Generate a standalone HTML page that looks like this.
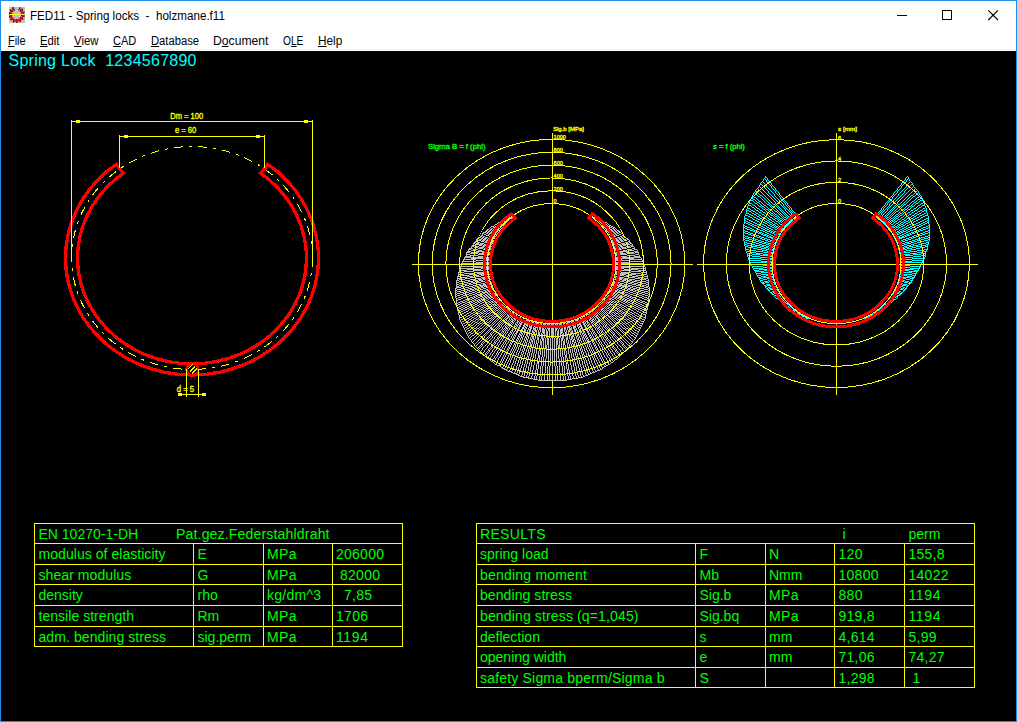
<!DOCTYPE html>
<html><head><meta charset="utf-8"><title>FED11 - Spring locks</title>
<style>
html,body{margin:0;padding:0;background:#000;}
body{width:1017px;height:722px;overflow:hidden;font-family:"Liberation Sans",sans-serif;}
#win{position:absolute;left:0;top:0;width:1015px;height:720px;border:1px solid #1e8fea;background:#000;overflow:hidden;}
#title{position:absolute;left:0;top:0;width:1015px;height:30px;background:#fff;}
#title .txt{position:absolute;left:29px;top:7px;font-size:12px;line-height:16px;color:#000;white-space:pre;transform-origin:0 0;transform:scaleX(0.970);}
#icon{position:absolute;left:8px;top:6px;width:16px;height:16px;}
#menu{position:absolute;left:0;top:30px;width:1015px;height:20px;background:#fff;border-bottom:0;}
#menu .line{position:absolute;left:0;top:18px;width:1015px;height:1px;background:#f0f0f0;}
.mi{position:absolute;top:2px;font-size:12px;line-height:16px;color:#000;white-space:pre;transform-origin:0 0;transform:scaleX(0.93);}
.mi u{text-decoration:underline;text-underline-offset:1px;}
#cv{position:absolute;left:-1px;top:-1px;}
#cv text{font-family:"Liberation Sans",sans-serif;white-space:pre;}
.cap{position:absolute;top:0;}
</style></head><body>
<div id="win">
<svg id="cv" width="1017" height="722" viewBox="0 0 1017 722" shape-rendering="crispEdges">
<ellipse cx="192" cy="258" rx="120.45" ry="111.45" fill="none" stroke="#ff0" stroke-width="1" stroke-dasharray="9 6 3 6"/>
<path d="M267.88 164.38 A126.47 117.02 0 1 1 116.12 164.38 L123.34 173.3 A114.43 105.88 0 1 0 260.66 173.3 Z" fill="none" stroke="#f00" stroke-width="3.3" stroke-linejoin="miter"/>
<ellipse cx="192.4" cy="369.45" rx="6" ry="5.6" fill="#000" stroke="#f00" stroke-width="2.2"/>
<line x1="187.8" y1="369.35" x2="192.8" y2="364.35" stroke="#ff0" stroke-width="1"/>
<line x1="189.9" y1="371.45" x2="194.9" y2="366.45" stroke="#ff0" stroke-width="1"/>
<line x1="192" y1="373.55" x2="197" y2="368.55" stroke="#ff0" stroke-width="1"/>
<path d="M71.55 261 V120 M312.95 261 V120 M71.55 121.5 H312.45" stroke="#ff0" stroke-width="1" fill="none"/>
<path d="M72.05 121.5 l7 -1.5 v3 z M76.05 120 h4 v3 h-4z" fill="#ff0"/>
<path d="M312.45 121.5 l-7 -1.5 v3 z M308.45 120 h-4 v3 h4z" fill="#ff0"/>
<path d="M119.73 168 V135 M264.77 168 V135 M119.73 136.5 H264.27" stroke="#ff0" stroke-width="1" fill="none"/>
<path d="M120.23 136.5 l7 -1.5 v3 z M124.23 135 h4 v3 h-4z" fill="#ff0"/>
<path d="M264.27 136.5 l-7 -1.5 v3 z M260.27 135 h-4 v3 h4z" fill="#ff0"/>
<path d="M186.4 369.45 V397 M198.4 369.45 V397 M178 394.5 H206" stroke="#ff0" stroke-width="1" fill="none"/>
<path d="M186.4 394.5 l-7 -1.5 v3z M182.4 393 h-4 v3 h4z" fill="#ff0"/>
<path d="M198.4 394.5 l7 -1.5 v3z M202.4 393 h4 v3 h-4z" fill="#ff0"/>
<text stroke="#ff0" stroke-width="0.35" x="170.2" y="119" font-size="8.3" textLength="33" lengthAdjust="spacingAndGlyphs" fill="#ff0">Dm = 100</text>
<text stroke="#ff0" stroke-width="0.35" x="175" y="133" font-size="8.3" textLength="21.3" lengthAdjust="spacingAndGlyphs" fill="#ff0">e = 60</text>
<text stroke="#ff0" stroke-width="0.35" x="176.8" y="392" font-size="8.3" textLength="17.3" lengthAdjust="spacingAndGlyphs" fill="#ff0">d = 5</text>
<path d="M412 264.5 H693 M552.1 133 V395" stroke="#ff0" stroke-width="1" fill="none"/>
<path d="M512 216.5h2M591 216.5h2M509 217.5h4M592 217.5h4M508 218.5h1M510 218.5h2M593 218.5h2M596 218.5h1M505 219.5h3M509 219.5h1M595 219.5h1M597 219.5h3M502 220.5h3M506 220.5h1M508 220.5h1M596 220.5h1M598 220.5h1M600 220.5h2M501 221.5h1M504 221.5h2M507 221.5h1M597 221.5h1M599 221.5h2M602 221.5h2M498 222.5h3M502 222.5h1M504 222.5h1M506 222.5h1M598 222.5h1M600 222.5h1M602 222.5h1M604 222.5h3M497 223.5h1M499 223.5h1M501 223.5h1M503 223.5h1M505 223.5h1M599 223.5h1M601 223.5h1M603 223.5h1M605 223.5h1M607 223.5h1M495 224.5h2M498 224.5h1M500 224.5h3M504 224.5h1M600 224.5h1M602 224.5h3M606 224.5h1M608 224.5h1M494 225.5h1M497 225.5h1M499 225.5h2M502 225.5h2M601 225.5h2M604 225.5h2M607 225.5h1M609 225.5h2M491 226.5h3M495 226.5h2M498 226.5h2M501 226.5h1M503 226.5h1M601 226.5h1M603 226.5h1M605 226.5h2M608 226.5h2M611 226.5h2M490 227.5h1M493 227.5h3M497 227.5h1M500 227.5h1M502 227.5h1M602 227.5h1M604 227.5h1M607 227.5h1M609 227.5h3M613 227.5h2M489 228.5h1M491 228.5h2M495 228.5h2M498 228.5h2M501 228.5h1M603 228.5h1M605 228.5h2M608 228.5h2M612 228.5h2M615 228.5h1M487 229.5h2M490 229.5h2M493 229.5h2M496 229.5h3M500 229.5h1M604 229.5h1M606 229.5h3M610 229.5h2M613 229.5h2M616 229.5h1M486 230.5h2M489 230.5h2M492 230.5h2M495 230.5h1M497 230.5h3M605 230.5h3M609 230.5h1M611 230.5h2M614 230.5h2M617 230.5h2M485 231.5h2M488 231.5h2M491 231.5h2M494 231.5h1M496 231.5h2M499 231.5h1M605 231.5h1M607 231.5h2M610 231.5h1M612 231.5h2M615 231.5h2M618 231.5h2M483 232.5h3M487 232.5h2M490 232.5h2M493 232.5h1M495 232.5h2M498 232.5h1M606 232.5h1M608 232.5h2M611 232.5h1M613 232.5h2M616 232.5h2M619 232.5h2M482 233.5h2M486 233.5h2M489 233.5h2M492 233.5h4M497 233.5h1M607 233.5h1M609 233.5h4M614 233.5h2M617 233.5h2M621 233.5h2M482 234.5h1M484 234.5h2M488 234.5h2M491 234.5h2M494 234.5h3M608 234.5h3M612 234.5h2M615 234.5h2M619 234.5h2M623 234.5h1M481 235.5h2M486 235.5h3M490 235.5h2M493 235.5h2M496 235.5h1M608 235.5h1M610 235.5h2M613 235.5h2M616 235.5h3M622 235.5h2M480 236.5h2M483 236.5h2M489 236.5h2M492 236.5h2M495 236.5h1M609 236.5h1M611 236.5h2M614 236.5h2M620 236.5h2M623 236.5h2M478 237.5h3M482 237.5h2M485 237.5h3M491 237.5h2M494 237.5h1M610 237.5h1M612 237.5h2M617 237.5h3M621 237.5h2M624 237.5h2M477 238.5h2M481 238.5h2M484 238.5h3M488 238.5h2M493 238.5h2M610 238.5h2M615 238.5h2M618 238.5h3M622 238.5h2M626 238.5h2M476 239.5h2M479 239.5h3M483 239.5h3M487 239.5h5M613 239.5h5M619 239.5h3M623 239.5h3M627 239.5h2M476 240.5h1M478 240.5h3M482 240.5h3M486 240.5h3M490 240.5h4M611 240.5h4M616 240.5h3M620 240.5h3M624 240.5h3M629 240.5h1M475 241.5h2M481 241.5h3M485 241.5h3M489 241.5h2M492 241.5h2M611 241.5h2M614 241.5h2M617 241.5h3M621 241.5h3M628 241.5h2M474 242.5h2M477 242.5h3M484 242.5h3M488 242.5h5M612 242.5h5M618 242.5h3M625 242.5h3M629 242.5h2M473 243.5h2M476 243.5h3M480 243.5h4M487 243.5h3M491 243.5h2M612 243.5h2M615 243.5h3M621 243.5h4M626 243.5h3M630 243.5h2M473 244.5h1M475 244.5h8M484 244.5h3M490 244.5h2M613 244.5h2M618 244.5h3M622 244.5h8M632 244.5h1M472 245.5h3M479 245.5h3M483 245.5h3M487 245.5h3M615 245.5h3M619 245.5h3M623 245.5h3M630 245.5h3M471 246.5h3M475 246.5h4M482 246.5h3M486 246.5h3M490 246.5h2M613 246.5h2M616 246.5h3M620 246.5h3M626 246.5h4M631 246.5h3M471 247.5h1M474 247.5h4M479 247.5h5M485 247.5h6M614 247.5h6M621 247.5h5M627 247.5h4M634 247.5h1M469 248.5h4M478 248.5h5M484 248.5h4M489 248.5h2M614 248.5h2M617 248.5h4M622 248.5h5M632 248.5h3M468 249.5h3M473 249.5h5M483 249.5h4M488 249.5h3M614 249.5h3M618 249.5h4M627 249.5h5M634 249.5h3M468 250.5h1M471 250.5h5M478 250.5h4M487 250.5h3M615 250.5h3M623 250.5h4M629 250.5h5M637 250.5h1M467 251.5h4M476 251.5h11M618 251.5h11M634 251.5h4M466 252.5h4M471 252.5h8M482 252.5h8M615 252.5h8M626 252.5h8M635 252.5h4M466 253.5h1M470 253.5h8M479 253.5h7M487 253.5h3M615 253.5h3M619 253.5h7M627 253.5h8M638 253.5h1M466 254.5h4M478 254.5h7M486 254.5h4M615 254.5h4M620 254.5h7M635 254.5h4M466 255.5h1M470 255.5h8M485 255.5h4M616 255.5h4M627 255.5h8M639 255.5h1M465 256.5h6M478 256.5h7M620 256.5h7M634 256.5h6M464 257.5h19M485 257.5h4M616 257.5h4M622 257.5h19M464 258.5h1M471 258.5h18M616 258.5h18M641 258.5h1M463 259.5h13M483 259.5h6M616 259.5h6M629 259.5h13M463 260.5h1M476 260.5h13M616 260.5h13M642 260.5h1M462 261.5h14M629 261.5h14M462 262.5h1M476 262.5h13M616 262.5h13M643 262.5h1M461 263.5h28M616 263.5h28M461 264.5h28M616 264.5h28M461 265.5h1M644 265.5h1M460 266.5h29M616 266.5h29M460 267.5h1M474 267.5h15M616 267.5h15M645 267.5h1M459 268.5h15M481 268.5h8M616 268.5h8M631 268.5h15M459 269.5h1M467 269.5h14M484 269.5h5M616 269.5h5M624 269.5h14M645 269.5h1M459 270.5h8M474 270.5h10M621 270.5h10M638 270.5h8M459 271.5h1M464 271.5h10M484 271.5h5M616 271.5h5M631 271.5h10M646 271.5h1M458 272.5h6M474 272.5h10M485 272.5h4M616 272.5h4M621 272.5h10M641 272.5h6M458 273.5h1M464 273.5h10M477 273.5h12M616 273.5h12M631 273.5h10M646 273.5h1M458 274.5h6M469 274.5h8M479 274.5h6M487 274.5h3M615 274.5h3M620 274.5h6M628 274.5h8M641 274.5h6M458 275.5h1M461 275.5h8M473 275.5h6M481 275.5h6M618 275.5h6M626 275.5h6M636 275.5h8M647 275.5h1M457 276.5h4M467 276.5h6M476 276.5h5M487 276.5h3M615 276.5h3M624 276.5h5M632 276.5h6M644 276.5h4M457 277.5h1M461 277.5h6M470 277.5h6M481 277.5h9M615 277.5h9M629 277.5h6M638 277.5h6M647 277.5h1M457 278.5h4M465 278.5h5M476 278.5h5M482 278.5h8M615 278.5h8M624 278.5h5M635 278.5h5M644 278.5h4M457 279.5h1M459 279.5h6M470 279.5h6M478 279.5h4M483 279.5h4M489 279.5h2M614 279.5h2M618 279.5h4M623 279.5h4M629 279.5h6M640 279.5h6M648 279.5h1M456 280.5h3M465 280.5h5M473 280.5h5M479 280.5h4M485 280.5h4M616 280.5h4M622 280.5h4M627 280.5h5M635 280.5h5M646 280.5h3M456 281.5h1M459 281.5h6M468 281.5h5M475 281.5h4M481 281.5h4M489 281.5h2M614 281.5h2M620 281.5h4M626 281.5h4M632 281.5h5M640 281.5h6M648 281.5h1M456 282.5h3M464 282.5h4M471 282.5h4M477 282.5h4M485 282.5h4M490 282.5h2M613 282.5h2M616 282.5h4M624 282.5h4M630 282.5h4M637 282.5h4M646 282.5h3M456 283.5h1M459 283.5h5M467 283.5h4M473 283.5h4M481 283.5h4M486 283.5h6M613 283.5h6M620 283.5h4M628 283.5h4M634 283.5h4M641 283.5h5M648 283.5h1M456 284.5h3M463 284.5h4M469 284.5h4M477 284.5h4M483 284.5h3M487 284.5h5M613 284.5h5M619 284.5h3M624 284.5h4M632 284.5h4M638 284.5h4M646 284.5h3M456 285.5h1M459 285.5h4M465 285.5h4M473 285.5h4M479 285.5h11M491 285.5h2M612 285.5h2M615 285.5h11M628 285.5h4M636 285.5h4M642 285.5h4M648 285.5h1M456 286.5h3M461 286.5h4M469 286.5h4M475 286.5h4M480 286.5h3M484 286.5h3M488 286.5h3M614 286.5h3M618 286.5h3M622 286.5h3M626 286.5h4M632 286.5h4M640 286.5h4M646 286.5h3M456 287.5h5M465 287.5h4M472 287.5h3M477 287.5h3M481 287.5h3M486 287.5h2M491 287.5h2M612 287.5h2M617 287.5h2M621 287.5h3M625 287.5h3M630 287.5h3M636 287.5h4M644 287.5h4M649 287.5h1M455 288.5h2M461 288.5h4M468 288.5h4M474 288.5h3M478 288.5h3M483 288.5h3M488 288.5h3M492 288.5h2M611 288.5h2M614 288.5h3M619 288.5h3M624 288.5h3M628 288.5h3M633 288.5h4M640 288.5h4M648 288.5h2M455 289.5h1M457 289.5h4M465 289.5h3M470 289.5h4M475 289.5h3M480 289.5h3M486 289.5h2M490 289.5h4M611 289.5h4M617 289.5h2M622 289.5h3M627 289.5h3M631 289.5h4M637 289.5h3M644 289.5h4M649 289.5h1M455 290.5h2M461 290.5h4M467 290.5h3M472 290.5h3M477 290.5h3M483 290.5h3M487 290.5h5M493 290.5h2M610 290.5h2M613 290.5h5M619 290.5h3M625 290.5h3M630 290.5h3M635 290.5h3M640 290.5h4M648 290.5h2M455 291.5h1M457 291.5h4M464 291.5h3M469 291.5h3M475 291.5h2M480 291.5h3M485 291.5h2M488 291.5h2M491 291.5h2M494 291.5h2M609 291.5h2M612 291.5h2M615 291.5h2M618 291.5h2M622 291.5h3M628 291.5h2M633 291.5h3M638 291.5h3M644 291.5h4M649 291.5h1M455 292.5h2M460 292.5h4M466 292.5h3M472 292.5h3M477 292.5h3M482 292.5h6M489 292.5h2M492 292.5h2M495 292.5h1M609 292.5h1M611 292.5h2M614 292.5h2M617 292.5h6M625 292.5h3M630 292.5h3M636 292.5h3M641 292.5h4M648 292.5h2M455 293.5h1M457 293.5h3M463 293.5h3M469 293.5h3M475 293.5h2M480 293.5h2M483 293.5h2M487 293.5h2M490 293.5h2M493 293.5h2M496 293.5h1M608 293.5h1M610 293.5h2M613 293.5h2M616 293.5h2M620 293.5h2M623 293.5h2M628 293.5h2M633 293.5h3M639 293.5h3M645 293.5h3M649 293.5h1M455 294.5h2M460 294.5h3M466 294.5h3M472 294.5h3M477 294.5h3M481 294.5h2M485 294.5h2M488 294.5h2M491 294.5h2M494 294.5h2M497 294.5h1M607 294.5h1M609 294.5h2M612 294.5h2M615 294.5h2M618 294.5h2M622 294.5h2M625 294.5h3M630 294.5h3M636 294.5h3M642 294.5h3M648 294.5h2M455 295.5h1M457 295.5h3M463 295.5h3M469 295.5h3M475 295.5h2M478 295.5h3M483 295.5h2M486 295.5h2M489 295.5h2M492 295.5h2M495 295.5h2M608 295.5h2M611 295.5h2M614 295.5h2M617 295.5h2M620 295.5h2M624 295.5h3M628 295.5h2M633 295.5h3M639 295.5h3M645 295.5h3M649 295.5h1M455 296.5h2M461 296.5h2M466 296.5h3M473 296.5h2M476 296.5h2M480 296.5h3M484 296.5h2M487 296.5h2M490 296.5h2M493 296.5h2M497 296.5h1M607 296.5h1M610 296.5h2M613 296.5h2M616 296.5h2M619 296.5h2M622 296.5h3M627 296.5h2M630 296.5h2M636 296.5h3M642 296.5h2M648 296.5h2M455 297.5h1M458 297.5h3M463 297.5h3M470 297.5h3M474 297.5h2M478 297.5h2M482 297.5h2M485 297.5h2M488 297.5h2M491 297.5h2M495 297.5h2M498 297.5h1M606 297.5h1M608 297.5h2M612 297.5h2M615 297.5h2M618 297.5h2M621 297.5h2M625 297.5h2M629 297.5h2M632 297.5h3M639 297.5h3M644 297.5h3M648 297.5h1M456 298.5h2M461 298.5h2M468 298.5h2M472 298.5h2M476 298.5h2M480 298.5h2M483 298.5h2M486 298.5h2M489 298.5h2M493 298.5h2M496 298.5h2M499 298.5h1M605 298.5h1M607 298.5h2M610 298.5h2M614 298.5h2M617 298.5h2M620 298.5h2M623 298.5h2M627 298.5h2M631 298.5h2M635 298.5h2M642 298.5h2M647 298.5h2M456 299.5h1M458 299.5h3M465 299.5h3M469 299.5h3M474 299.5h2M478 299.5h2M481 299.5h2M484 299.5h2M488 299.5h1M491 299.5h2M494 299.5h2M497 299.5h2M500 299.5h1M604 299.5h1M606 299.5h2M609 299.5h2M612 299.5h2M616 299.5h1M619 299.5h2M622 299.5h2M625 299.5h2M629 299.5h2M633 299.5h3M637 299.5h3M644 299.5h3M648 299.5h1M456 300.5h2M463 300.5h2M467 300.5h2M472 300.5h2M475 300.5h3M479 300.5h2M482 300.5h2M486 300.5h2M490 300.5h1M493 300.5h1M496 300.5h1M498 300.5h3M604 300.5h3M608 300.5h1M611 300.5h1M614 300.5h1M617 300.5h2M621 300.5h2M624 300.5h2M627 300.5h3M631 300.5h2M636 300.5h2M640 300.5h2M647 300.5h2M456 301.5h1M460 301.5h3M465 301.5h2M469 301.5h3M473 301.5h2M477 301.5h2M480 301.5h2M484 301.5h2M488 301.5h2M491 301.5h2M494 301.5h2M497 301.5h3M501 301.5h1M603 301.5h1M605 301.5h3M609 301.5h2M612 301.5h2M615 301.5h2M619 301.5h2M623 301.5h2M626 301.5h2M630 301.5h2M633 301.5h3M638 301.5h2M642 301.5h3M648 301.5h1M456 302.5h1M458 302.5h2M462 302.5h3M467 302.5h2M471 302.5h2M475 302.5h2M478 302.5h2M482 302.5h2M486 302.5h2M489 302.5h2M492 302.5h2M495 302.5h3M499 302.5h2M502 302.5h1M602 302.5h1M604 302.5h2M607 302.5h3M611 302.5h2M614 302.5h2M617 302.5h2M621 302.5h2M625 302.5h2M628 302.5h2M632 302.5h2M636 302.5h2M640 302.5h3M645 302.5h2M648 302.5h1M456 303.5h2M460 303.5h2M465 303.5h2M469 303.5h2M473 303.5h2M477 303.5h1M480 303.5h2M485 303.5h1M488 303.5h1M491 303.5h1M494 303.5h1M496 303.5h1M498 303.5h1M501 303.5h1M503 303.5h1M601 303.5h1M603 303.5h1M606 303.5h1M608 303.5h1M610 303.5h1M613 303.5h1M616 303.5h1M619 303.5h1M623 303.5h2M627 303.5h1M630 303.5h2M634 303.5h2M638 303.5h2M643 303.5h2M647 303.5h2M456 304.5h1M458 304.5h2M463 304.5h2M467 304.5h2M471 304.5h2M475 304.5h2M479 304.5h1M483 304.5h2M486 304.5h2M489 304.5h2M492 304.5h4M497 304.5h1M499 304.5h2M502 304.5h1M504 304.5h1M600 304.5h1M602 304.5h1M604 304.5h2M607 304.5h1M609 304.5h4M614 304.5h2M617 304.5h2M620 304.5h2M625 304.5h1M628 304.5h2M632 304.5h2M636 304.5h2M640 304.5h2M645 304.5h2M648 304.5h1M456 305.5h2M461 305.5h2M465 305.5h2M469 305.5h2M473 305.5h2M477 305.5h2M481 305.5h2M484 305.5h2M488 305.5h1M491 305.5h1M493 305.5h1M495 305.5h2M498 305.5h1M500 305.5h2M503 305.5h1M505 305.5h1M599 305.5h1M601 305.5h1M603 305.5h2M606 305.5h1M608 305.5h2M611 305.5h1M613 305.5h1M616 305.5h1M619 305.5h2M622 305.5h2M626 305.5h2M630 305.5h2M634 305.5h2M638 305.5h2M642 305.5h2M647 305.5h2M456 306.5h1M459 306.5h2M463 306.5h2M467 306.5h2M471 306.5h2M475 306.5h2M479 306.5h2M483 306.5h1M486 306.5h2M489 306.5h4M494 306.5h1M497 306.5h1M499 306.5h1M501 306.5h2M504 306.5h1M506 306.5h2M597 306.5h2M600 306.5h1M602 306.5h2M605 306.5h1M607 306.5h1M610 306.5h1M612 306.5h4M617 306.5h2M621 306.5h1M624 306.5h2M628 306.5h2M632 306.5h2M636 306.5h2M640 306.5h2M644 306.5h2M647 306.5h1M457 307.5h2M461 307.5h2M465 307.5h2M469 307.5h2M473 307.5h2M478 307.5h1M481 307.5h2M484 307.5h2M488 307.5h1M490 307.5h1M493 307.5h1M495 307.5h2M498 307.5h1M500 307.5h1M503 307.5h1M505 307.5h2M508 307.5h1M596 307.5h1M598 307.5h2M601 307.5h1M604 307.5h1M606 307.5h1M608 307.5h2M611 307.5h1M614 307.5h1M616 307.5h1M619 307.5h2M622 307.5h2M626 307.5h1M630 307.5h2M634 307.5h2M638 307.5h2M642 307.5h2M646 307.5h2M457 308.5h1M459 308.5h2M463 308.5h2M467 308.5h2M471 308.5h2M476 308.5h2M480 308.5h1M483 308.5h1M486 308.5h4M491 308.5h2M494 308.5h1M496 308.5h2M499 308.5h1M501 308.5h2M504 308.5h2M507 308.5h1M509 308.5h1M595 308.5h1M597 308.5h1M599 308.5h2M602 308.5h2M605 308.5h1M607 308.5h2M610 308.5h1M612 308.5h2M615 308.5h4M621 308.5h1M624 308.5h1M627 308.5h2M632 308.5h2M636 308.5h2M640 308.5h2M644 308.5h2M647 308.5h1M457 309.5h2M461 309.5h2M465 309.5h2M469 309.5h2M474 309.5h2M478 309.5h2M481 309.5h2M485 309.5h1M487 309.5h1M490 309.5h1M493 309.5h1M495 309.5h1M498 309.5h1M500 309.5h1M502 309.5h3M506 309.5h1M508 309.5h1M510 309.5h1M594 309.5h1M596 309.5h1M598 309.5h1M600 309.5h3M604 309.5h1M606 309.5h1M609 309.5h1M611 309.5h1M614 309.5h1M617 309.5h1M619 309.5h1M622 309.5h2M625 309.5h2M629 309.5h2M634 309.5h2M638 309.5h2M642 309.5h2M646 309.5h2M457 310.5h1M459 310.5h2M463 310.5h2M468 310.5h1M472 310.5h2M476 310.5h2M480 310.5h1M483 310.5h2M486 310.5h1M488 310.5h2M491 310.5h2M494 310.5h1M496 310.5h2M499 310.5h1M501 310.5h1M503 310.5h1M505 310.5h1M507 310.5h1M509 310.5h1M511 310.5h1M593 310.5h1M595 310.5h1M597 310.5h1M599 310.5h1M601 310.5h1M603 310.5h1M605 310.5h1M607 310.5h2M610 310.5h1M612 310.5h2M615 310.5h2M618 310.5h1M620 310.5h2M624 310.5h1M627 310.5h2M631 310.5h2M636 310.5h1M640 310.5h2M644 310.5h3M458 311.5h1M461 311.5h2M466 311.5h2M471 311.5h1M475 311.5h1M478 311.5h2M482 311.5h1M484 311.5h2M487 311.5h1M490 311.5h1M493 311.5h1M495 311.5h1M498 311.5h1M500 311.5h1M502 311.5h1M504 311.5h1M506 311.5h1M508 311.5h1M510 311.5h1M512 311.5h2M591 311.5h2M594 311.5h1M596 311.5h1M598 311.5h1M600 311.5h1M602 311.5h1M604 311.5h1M606 311.5h1M609 311.5h1M611 311.5h1M614 311.5h1M617 311.5h1M619 311.5h2M622 311.5h1M625 311.5h2M629 311.5h1M633 311.5h1M637 311.5h2M642 311.5h2M646 311.5h1M458 312.5h3M464 312.5h2M469 312.5h2M473 312.5h2M477 312.5h1M480 312.5h2M483 312.5h1M486 312.5h1M489 312.5h1M491 312.5h2M494 312.5h1M497 312.5h1M499 312.5h1M501 312.5h1M503 312.5h1M505 312.5h1M507 312.5h1M509 312.5h1M511 312.5h2M514 312.5h1M590 312.5h1M592 312.5h2M595 312.5h1M597 312.5h1M599 312.5h1M601 312.5h1M603 312.5h1M605 312.5h1M607 312.5h1M610 312.5h1M612 312.5h2M615 312.5h1M618 312.5h1M621 312.5h1M623 312.5h2M627 312.5h1M630 312.5h2M634 312.5h2M639 312.5h2M644 312.5h3M458 313.5h1M462 313.5h2M467 313.5h2M471 313.5h2M475 313.5h2M478 313.5h2M481 313.5h2M484 313.5h2M487 313.5h2M490 313.5h1M493 313.5h1M495 313.5h2M498 313.5h1M500 313.5h1M502 313.5h1M504 313.5h1M506 313.5h1M508 313.5h1M510 313.5h2M513 313.5h1M515 313.5h1M589 313.5h1M591 313.5h1M593 313.5h2M596 313.5h1M598 313.5h1M600 313.5h1M602 313.5h1M604 313.5h1M606 313.5h1M608 313.5h2M611 313.5h1M614 313.5h1M616 313.5h2M619 313.5h2M622 313.5h2M625 313.5h2M628 313.5h2M632 313.5h2M636 313.5h2M641 313.5h2M646 313.5h1M458 314.5h1M460 314.5h2M466 314.5h1M470 314.5h1M473 314.5h2M477 314.5h1M480 314.5h1M483 314.5h1M486 314.5h1M489 314.5h1M492 314.5h1M494 314.5h1M497 314.5h1M499 314.5h1M501 314.5h1M503 314.5h1M505 314.5h1M507 314.5h1M509 314.5h1M511 314.5h2M514 314.5h1M516 314.5h2M587 314.5h2M590 314.5h1M592 314.5h2M595 314.5h1M597 314.5h1M599 314.5h1M601 314.5h1M603 314.5h1M605 314.5h1M607 314.5h1M610 314.5h1M612 314.5h1M615 314.5h1M618 314.5h1M621 314.5h1M624 314.5h1M627 314.5h1M630 314.5h2M634 314.5h1M638 314.5h1M643 314.5h3M459 315.5h1M464 315.5h2M468 315.5h2M472 315.5h1M475 315.5h2M478 315.5h2M482 315.5h1M485 315.5h1M488 315.5h1M490 315.5h2M493 315.5h1M496 315.5h3M500 315.5h1M502 315.5h1M504 315.5h1M507 315.5h2M510 315.5h1M512 315.5h1M514 315.5h3M518 315.5h1M586 315.5h1M588 315.5h3M592 315.5h1M594 315.5h1M596 315.5h2M600 315.5h1M602 315.5h1M604 315.5h1M606 315.5h3M611 315.5h1M613 315.5h2M616 315.5h1M619 315.5h1M622 315.5h1M625 315.5h2M628 315.5h2M632 315.5h1M635 315.5h2M639 315.5h2M645 315.5h1M459 316.5h1M462 316.5h2M466 316.5h2M470 316.5h2M474 316.5h1M477 316.5h1M480 316.5h2M483 316.5h2M486 316.5h2M489 316.5h1M492 316.5h1M494 316.5h3M499 316.5h1M501 316.5h1M503 316.5h1M506 316.5h1M508 316.5h2M511 316.5h1M513 316.5h1M515 316.5h3M520 316.5h2M583 316.5h2M587 316.5h3M591 316.5h1M593 316.5h1M595 316.5h2M598 316.5h1M601 316.5h1M603 316.5h1M605 316.5h1M608 316.5h3M612 316.5h1M615 316.5h1M617 316.5h2M620 316.5h2M623 316.5h2M627 316.5h1M630 316.5h1M633 316.5h2M637 316.5h2M641 316.5h2M645 316.5h1M459 317.5h3M465 317.5h1M469 317.5h1M472 317.5h2M476 317.5h1M479 317.5h1M482 317.5h1M485 317.5h1M488 317.5h1M491 317.5h1M493 317.5h1M495 317.5h1M498 317.5h1M500 317.5h1M502 317.5h1M505 317.5h1M507 317.5h2M510 317.5h1M512 317.5h1M514 317.5h2M517 317.5h1M519 317.5h2M522 317.5h1M582 317.5h1M584 317.5h2M587 317.5h1M589 317.5h2M592 317.5h1M594 317.5h1M596 317.5h2M599 317.5h1M602 317.5h1M604 317.5h1M606 317.5h1M609 317.5h1M611 317.5h1M613 317.5h1M616 317.5h1M619 317.5h1M622 317.5h1M625 317.5h1M628 317.5h1M631 317.5h2M635 317.5h1M639 317.5h1M643 317.5h3M459 318.5h1M463 318.5h2M467 318.5h2M471 318.5h1M474 318.5h2M478 318.5h1M481 318.5h1M484 318.5h1M487 318.5h1M489 318.5h2M492 318.5h1M494 318.5h1M497 318.5h1M499 318.5h1M501 318.5h1M504 318.5h1M506 318.5h2M509 318.5h1M511 318.5h1M513 318.5h2M516 318.5h1M519 318.5h3M523 318.5h2M580 318.5h2M583 318.5h3M588 318.5h1M590 318.5h2M593 318.5h1M595 318.5h1M597 318.5h2M600 318.5h1M603 318.5h1M605 318.5h1M607 318.5h1M610 318.5h1M612 318.5h1M614 318.5h2M617 318.5h1M620 318.5h1M623 318.5h1M626 318.5h1M629 318.5h2M633 318.5h1M636 318.5h2M640 318.5h2M645 318.5h1M459 319.5h1M461 319.5h2M465 319.5h2M469 319.5h2M473 319.5h1M476 319.5h2M479 319.5h2M482 319.5h2M485 319.5h2M488 319.5h1M491 319.5h1M493 319.5h1M496 319.5h1M498 319.5h1M501 319.5h1M503 319.5h1M505 319.5h2M509 319.5h1M511 319.5h2M514 319.5h2M518 319.5h2M521 319.5h3M526 319.5h2M577 319.5h2M581 319.5h3M585 319.5h2M589 319.5h2M592 319.5h2M595 319.5h1M598 319.5h2M601 319.5h1M603 319.5h1M606 319.5h1M608 319.5h1M611 319.5h1M613 319.5h1M616 319.5h1M618 319.5h2M621 319.5h2M624 319.5h2M627 319.5h2M631 319.5h1M634 319.5h2M638 319.5h2M642 319.5h3M460 320.5h1M464 320.5h1M468 320.5h1M471 320.5h2M475 320.5h1M478 320.5h1M481 320.5h1M484 320.5h1M487 320.5h1M490 320.5h1M492 320.5h1M495 320.5h1M497 320.5h1M500 320.5h1M502 320.5h1M504 320.5h1M506 320.5h1M508 320.5h1M510 320.5h1M512 320.5h2M515 320.5h1M517 320.5h1M519 320.5h2M522 320.5h2M526 320.5h4M575 320.5h4M581 320.5h2M584 320.5h2M587 320.5h1M589 320.5h1M591 320.5h2M594 320.5h1M596 320.5h1M598 320.5h1M600 320.5h1M602 320.5h1M604 320.5h1M607 320.5h1M609 320.5h1M612 320.5h1M614 320.5h1M617 320.5h1M620 320.5h1M623 320.5h1M626 320.5h1M629 320.5h1M632 320.5h2M636 320.5h1M640 320.5h1M644 320.5h1M460 321.5h1M462 321.5h2M466 321.5h2M470 321.5h1M473 321.5h2M477 321.5h1M480 321.5h1M483 321.5h1M486 321.5h1M489 321.5h1M491 321.5h1M494 321.5h1M496 321.5h1M499 321.5h1M501 321.5h1M503 321.5h1M505 321.5h1M507 321.5h1M509 321.5h1M511 321.5h2M514 321.5h1M517 321.5h2M520 321.5h3M525 321.5h2M528 321.5h2M531 321.5h3M571 321.5h3M575 321.5h2M578 321.5h2M582 321.5h3M586 321.5h2M590 321.5h1M592 321.5h2M595 321.5h1M597 321.5h1M599 321.5h1M601 321.5h1M603 321.5h1M605 321.5h1M608 321.5h1M610 321.5h1M613 321.5h1M615 321.5h1M618 321.5h1M621 321.5h1M624 321.5h1M627 321.5h1M630 321.5h2M634 321.5h1M637 321.5h2M641 321.5h3M461 322.5h1M465 322.5h1M468 322.5h2M472 322.5h1M475 322.5h2M479 322.5h1M482 322.5h1M485 322.5h1M487 322.5h2M490 322.5h1M493 322.5h1M495 322.5h1M498 322.5h1M500 322.5h1M502 322.5h1M504 322.5h1M506 322.5h1M508 322.5h1M510 322.5h1M512 322.5h2M516 322.5h2M519 322.5h1M521 322.5h2M525 322.5h4M531 322.5h3M535 322.5h3M567 322.5h3M571 322.5h3M576 322.5h4M582 322.5h2M585 322.5h1M587 322.5h2M591 322.5h2M594 322.5h1M596 322.5h1M598 322.5h1M600 322.5h1M602 322.5h1M604 322.5h1M606 322.5h1M609 322.5h1M611 322.5h1M614 322.5h1M616 322.5h2M619 322.5h1M622 322.5h1M625 322.5h1M628 322.5h2M632 322.5h1M635 322.5h2M639 322.5h1M643 322.5h1M461 323.5h1M463 323.5h2M467 323.5h1M471 323.5h1M474 323.5h1M477 323.5h2M480 323.5h2M483 323.5h2M486 323.5h1M489 323.5h1M492 323.5h1M494 323.5h1M497 323.5h1M499 323.5h1M501 323.5h1M503 323.5h1M505 323.5h1M508 323.5h2M511 323.5h1M513 323.5h1M515 323.5h1M517 323.5h1M519 323.5h3M524 323.5h2M527 323.5h2M530 323.5h3M535 323.5h4M540 323.5h2M543 323.5h2M560 323.5h2M563 323.5h2M566 323.5h4M572 323.5h3M576 323.5h2M579 323.5h2M583 323.5h3M587 323.5h1M589 323.5h1M591 323.5h1M593 323.5h1M595 323.5h2M599 323.5h1M601 323.5h1M603 323.5h1M605 323.5h1M607 323.5h1M610 323.5h1M612 323.5h1M615 323.5h1M618 323.5h1M620 323.5h2M623 323.5h2M626 323.5h2M630 323.5h1M633 323.5h1M637 323.5h1M640 323.5h3M462 324.5h1M466 324.5h1M469 324.5h2M473 324.5h1M476 324.5h1M479 324.5h1M482 324.5h1M485 324.5h1M488 324.5h1M491 324.5h1M493 324.5h1M496 324.5h1M498 324.5h1M500 324.5h1M502 324.5h1M505 324.5h1M507 324.5h1M509 324.5h2M512 324.5h1M515 324.5h2M518 324.5h1M520 324.5h2M524 324.5h4M530 324.5h3M534 324.5h3M538 324.5h1M540 324.5h2M543 324.5h3M547 324.5h3M551 324.5h3M555 324.5h3M559 324.5h3M563 324.5h2M566 324.5h1M568 324.5h3M572 324.5h3M577 324.5h4M583 324.5h2M586 324.5h1M588 324.5h2M592 324.5h1M594 324.5h2M597 324.5h1M599 324.5h1M602 324.5h1M604 324.5h1M606 324.5h1M608 324.5h1M611 324.5h1M613 324.5h1M616 324.5h1M619 324.5h1M622 324.5h1M625 324.5h1M628 324.5h1M631 324.5h1M634 324.5h2M638 324.5h1M642 324.5h1M462 325.5h1M464 325.5h2M468 325.5h1M471 325.5h2M475 325.5h1M478 325.5h1M481 325.5h1M484 325.5h1M487 325.5h1M489 325.5h2M492 325.5h1M495 325.5h1M498 325.5h2M501 325.5h1M504 325.5h1M506 325.5h1M508 325.5h2M511 325.5h1M514 325.5h1M516 325.5h2M519 325.5h2M523 325.5h2M526 325.5h2M529 325.5h1M531 325.5h2M534 325.5h3M538 325.5h1M540 325.5h2M543 325.5h3M547 325.5h3M551 325.5h3M555 325.5h3M559 325.5h3M563 325.5h2M566 325.5h1M568 325.5h3M572 325.5h2M575 325.5h1M577 325.5h2M580 325.5h2M584 325.5h2M587 325.5h2M590 325.5h1M593 325.5h1M595 325.5h2M598 325.5h1M600 325.5h1M603 325.5h1M605 325.5h2M609 325.5h1M612 325.5h1M614 325.5h2M617 325.5h1M620 325.5h1M623 325.5h1M626 325.5h1M629 325.5h1M632 325.5h2M636 325.5h1M639 325.5h3M463 326.5h1M467 326.5h1M470 326.5h1M474 326.5h1M477 326.5h1M480 326.5h1M483 326.5h1M486 326.5h1M488 326.5h1M491 326.5h1M494 326.5h1M497 326.5h1M499 326.5h1M501 326.5h1M503 326.5h1M505 326.5h1M507 326.5h1M509 326.5h1M511 326.5h1M514 326.5h2M517 326.5h1M519 326.5h2M523 326.5h3M527 326.5h1M529 326.5h3M534 326.5h4M539 326.5h2M543 326.5h3M547 326.5h3M551 326.5h3M555 326.5h3M559 326.5h3M564 326.5h2M567 326.5h4M573 326.5h3M577 326.5h1M579 326.5h3M584 326.5h2M587 326.5h1M589 326.5h2M593 326.5h1M595 326.5h1M597 326.5h1M599 326.5h1M601 326.5h1M603 326.5h1M605 326.5h1M607 326.5h1M610 326.5h1M613 326.5h1M616 326.5h1M618 326.5h1M621 326.5h1M624 326.5h1M627 326.5h1M630 326.5h1M634 326.5h1M637 326.5h1M641 326.5h1M463 327.5h1M465 327.5h2M469 327.5h1M472 327.5h2M476 327.5h1M479 327.5h1M482 327.5h1M485 327.5h1M487 327.5h1M491 327.5h1M493 327.5h1M496 327.5h1M498 327.5h1M500 327.5h1M502 327.5h1M505 327.5h2M508 327.5h1M510 327.5h1M513 327.5h2M516 327.5h1M518 327.5h2M522 327.5h2M525 327.5h2M529 327.5h3M533 327.5h1M535 327.5h3M539 327.5h2M542 327.5h2M545 327.5h1M547 327.5h3M551 327.5h3M555 327.5h3M559 327.5h1M561 327.5h2M564 327.5h2M567 327.5h3M571 327.5h1M573 327.5h3M578 327.5h2M581 327.5h2M585 327.5h2M588 327.5h1M590 327.5h2M594 327.5h1M596 327.5h1M598 327.5h2M602 327.5h1M604 327.5h1M606 327.5h1M608 327.5h1M611 327.5h1M613 327.5h1M617 327.5h1M619 327.5h1M622 327.5h1M625 327.5h1M628 327.5h1M631 327.5h2M635 327.5h1M638 327.5h3M464 328.5h1M467 328.5h2M471 328.5h1M474 328.5h2M477 328.5h2M480 328.5h2M484 328.5h1M486 328.5h1M490 328.5h1M492 328.5h1M495 328.5h1M497 328.5h1M499 328.5h1M502 328.5h1M504 328.5h1M506 328.5h2M509 328.5h1M512 328.5h1M514 328.5h1M516 328.5h1M518 328.5h2M522 328.5h3M526 328.5h1M528 328.5h1M530 328.5h2M533 328.5h3M537 328.5h1M539 328.5h2M542 328.5h2M545 328.5h1M547 328.5h3M551 328.5h3M555 328.5h3M559 328.5h1M561 328.5h2M564 328.5h2M567 328.5h1M569 328.5h3M573 328.5h2M576 328.5h1M578 328.5h1M580 328.5h3M585 328.5h2M588 328.5h1M590 328.5h1M592 328.5h1M595 328.5h1M597 328.5h2M600 328.5h1M602 328.5h1M605 328.5h1M607 328.5h1M609 328.5h1M612 328.5h1M614 328.5h1M618 328.5h1M620 328.5h1M623 328.5h2M626 328.5h2M629 328.5h2M633 328.5h1M636 328.5h2M640 328.5h1M464 329.5h1M466 329.5h1M470 329.5h1M473 329.5h1M476 329.5h1M479 329.5h1M483 329.5h1M485 329.5h1M489 329.5h1M491 329.5h1M494 329.5h1M496 329.5h1M498 329.5h1M501 329.5h1M503 329.5h1M505 329.5h1M507 329.5h1M509 329.5h1M512 329.5h2M515 329.5h1M517 329.5h2M521 329.5h2M524 329.5h2M528 329.5h3M533 329.5h3M537 329.5h1M539 329.5h2M542 329.5h3M546 329.5h1M548 329.5h2M551 329.5h3M555 329.5h2M558 329.5h1M560 329.5h3M564 329.5h2M567 329.5h1M569 329.5h3M574 329.5h3M579 329.5h2M582 329.5h2M586 329.5h2M589 329.5h1M591 329.5h2M595 329.5h1M597 329.5h1M599 329.5h1M601 329.5h1M603 329.5h1M606 329.5h1M608 329.5h1M610 329.5h1M613 329.5h1M615 329.5h1M619 329.5h1M621 329.5h1M625 329.5h1M628 329.5h1M631 329.5h1M634 329.5h1M638 329.5h2M465 330.5h1M468 330.5h2M472 330.5h1M475 330.5h1M478 330.5h1M482 330.5h1M484 330.5h1M488 330.5h1M490 330.5h1M493 330.5h1M495 330.5h1M497 330.5h1M500 330.5h1M502 330.5h1M504 330.5h1M506 330.5h1M508 330.5h1M511 330.5h2M515 330.5h1M517 330.5h2M521 330.5h2M524 330.5h2M527 330.5h1M529 330.5h2M532 330.5h1M534 330.5h3M538 330.5h1M540 330.5h1M542 330.5h3M546 330.5h1M548 330.5h2M551 330.5h3M555 330.5h2M558 330.5h1M560 330.5h3M564 330.5h1M566 330.5h1M568 330.5h3M572 330.5h1M574 330.5h2M577 330.5h1M579 330.5h2M582 330.5h2M586 330.5h2M589 330.5h1M592 330.5h2M596 330.5h1M598 330.5h1M600 330.5h1M602 330.5h1M604 330.5h1M607 330.5h1M609 330.5h1M611 330.5h1M614 330.5h1M616 330.5h1M620 330.5h1M622 330.5h1M626 330.5h1M629 330.5h1M632 330.5h1M635 330.5h2M639 330.5h1M465 331.5h1M467 331.5h1M471 331.5h1M474 331.5h1M477 331.5h1M481 331.5h1M483 331.5h1M487 331.5h1M489 331.5h1M492 331.5h1M494 331.5h1M496 331.5h1M499 331.5h1M502 331.5h2M505 331.5h1M507 331.5h1M510 331.5h1M512 331.5h1M514 331.5h1M516 331.5h2M520 331.5h2M523 331.5h1M525 331.5h1M527 331.5h1M529 331.5h2M532 331.5h2M535 331.5h2M538 331.5h1M540 331.5h1M542 331.5h3M546 331.5h2M549 331.5h1M551 331.5h3M555 331.5h1M557 331.5h2M560 331.5h3M564 331.5h1M566 331.5h1M568 331.5h2M571 331.5h2M574 331.5h2M577 331.5h1M579 331.5h1M581 331.5h1M583 331.5h2M587 331.5h2M590 331.5h1M592 331.5h1M594 331.5h1M597 331.5h1M599 331.5h1M601 331.5h2M605 331.5h1M608 331.5h1M610 331.5h1M612 331.5h1M615 331.5h1M617 331.5h1M621 331.5h1M623 331.5h1M627 331.5h1M630 331.5h1M633 331.5h1M637 331.5h2M466 332.5h1M469 332.5h2M473 332.5h1M476 332.5h1M479 332.5h2M482 332.5h1M486 332.5h1M488 332.5h1M491 332.5h1M493 332.5h1M496 332.5h1M498 332.5h1M501 332.5h1M503 332.5h1M505 332.5h1M507 332.5h1M510 332.5h2M513 332.5h1M516 332.5h2M520 332.5h2M523 332.5h2M527 332.5h3M532 332.5h3M536 332.5h1M538 332.5h2M542 332.5h3M546 332.5h2M549 332.5h1M551 332.5h3M555 332.5h1M557 332.5h2M560 332.5h3M565 332.5h2M568 332.5h1M570 332.5h3M575 332.5h3M580 332.5h2M583 332.5h2M587 332.5h2M591 332.5h1M593 332.5h2M597 332.5h1M599 332.5h1M601 332.5h1M603 332.5h1M606 332.5h1M608 332.5h1M611 332.5h1M613 332.5h1M616 332.5h1M618 332.5h1M622 332.5h1M624 332.5h2M628 332.5h1M631 332.5h1M634 332.5h2M638 332.5h1M466 333.5h1M468 333.5h1M471 333.5h2M475 333.5h1M478 333.5h1M481 333.5h1M485 333.5h1M487 333.5h1M490 333.5h1M492 333.5h1M495 333.5h1M498 333.5h1M500 333.5h1M502 333.5h1M504 333.5h1M506 333.5h1M509 333.5h1M511 333.5h1M513 333.5h1M515 333.5h2M519 333.5h1M521 333.5h2M524 333.5h1M526 333.5h1M528 333.5h2M531 333.5h1M533 333.5h2M536 333.5h1M538 333.5h2M541 333.5h1M543 333.5h2M546 333.5h2M549 333.5h1M551 333.5h3M555 333.5h1M557 333.5h2M560 333.5h2M563 333.5h1M565 333.5h2M568 333.5h1M570 333.5h2M573 333.5h1M575 333.5h2M578 333.5h1M580 333.5h1M582 333.5h2M585 333.5h1M588 333.5h2M591 333.5h1M593 333.5h1M595 333.5h1M598 333.5h1M600 333.5h1M602 333.5h1M604 333.5h1M606 333.5h1M609 333.5h1M612 333.5h1M614 333.5h1M617 333.5h1M619 333.5h1M623 333.5h1M626 333.5h1M629 333.5h1M632 333.5h2M636 333.5h2M467 334.5h1M470 334.5h1M474 334.5h1M477 334.5h1M480 334.5h1M484 334.5h1M486 334.5h1M490 334.5h2M494 334.5h1M497 334.5h1M499 334.5h1M501 334.5h1M503 334.5h1M505 334.5h1M508 334.5h1M510 334.5h1M512 334.5h1M514 334.5h1M516 334.5h1M519 334.5h2M522 334.5h1M524 334.5h1M526 334.5h2M529 334.5h1M531 334.5h1M533 334.5h2M536 334.5h1M538 334.5h2M541 334.5h2M544 334.5h1M546 334.5h2M549 334.5h1M551 334.5h3M555 334.5h1M557 334.5h2M560 334.5h1M562 334.5h2M565 334.5h2M568 334.5h1M570 334.5h2M573 334.5h1M575 334.5h1M577 334.5h2M580 334.5h1M582 334.5h1M584 334.5h2M588 334.5h1M590 334.5h1M592 334.5h1M594 334.5h1M596 334.5h1M599 334.5h1M601 334.5h1M603 334.5h1M605 334.5h1M607 334.5h1M610 334.5h1M613 334.5h2M618 334.5h1M620 334.5h1M624 334.5h1M627 334.5h1M630 334.5h1M634 334.5h1M637 334.5h1M467 335.5h1M469 335.5h1M472 335.5h2M476 335.5h1M479 335.5h1M483 335.5h1M485 335.5h1M489 335.5h1M491 335.5h1M493 335.5h1M496 335.5h1M499 335.5h2M503 335.5h1M505 335.5h1M508 335.5h2M512 335.5h1M514 335.5h2M518 335.5h1M520 335.5h2M523 335.5h1M526 335.5h2M529 335.5h1M531 335.5h2M534 335.5h2M537 335.5h1M539 335.5h1M541 335.5h2M544 335.5h1M546 335.5h2M549 335.5h1M551 335.5h3M555 335.5h1M557 335.5h2M560 335.5h1M562 335.5h2M565 335.5h1M567 335.5h1M569 335.5h2M572 335.5h2M575 335.5h1M577 335.5h2M581 335.5h1M583 335.5h2M586 335.5h1M589 335.5h2M592 335.5h1M595 335.5h2M599 335.5h1M601 335.5h1M604 335.5h2M608 335.5h1M611 335.5h1M613 335.5h1M615 335.5h1M619 335.5h1M621 335.5h1M625 335.5h1M628 335.5h1M631 335.5h2M635 335.5h2M468 336.5h1M471 336.5h1M475 336.5h1M478 336.5h1M482 336.5h1M484 336.5h1M488 336.5h1M490 336.5h1M492 336.5h1M495 336.5h1M498 336.5h1M500 336.5h1M502 336.5h1M504 336.5h1M507 336.5h1M509 336.5h1M511 336.5h1M513 336.5h1M515 336.5h1M518 336.5h2M521 336.5h1M523 336.5h1M525 336.5h1M527 336.5h2M531 336.5h3M535 336.5h1M537 336.5h1M539 336.5h1M541 336.5h2M544 336.5h1M546 336.5h2M549 336.5h1M551 336.5h3M555 336.5h1M557 336.5h2M560 336.5h1M562 336.5h2M565 336.5h1M567 336.5h1M569 336.5h1M571 336.5h3M576 336.5h2M579 336.5h1M581 336.5h1M583 336.5h1M585 336.5h2M589 336.5h1M591 336.5h1M593 336.5h1M595 336.5h1M597 336.5h1M600 336.5h1M602 336.5h1M604 336.5h1M606 336.5h1M609 336.5h1M612 336.5h1M614 336.5h1M616 336.5h1M620 336.5h1M622 336.5h1M626 336.5h1M629 336.5h1M633 336.5h1M636 336.5h1M468 337.5h1M470 337.5h1M474 337.5h1M477 337.5h1M481 337.5h1M484 337.5h1M487 337.5h1M489 337.5h1M492 337.5h1M494 337.5h1M497 337.5h1M499 337.5h1M501 337.5h1M503 337.5h1M506 337.5h1M508 337.5h1M511 337.5h1M513 337.5h2M517 337.5h1M519 337.5h1M521 337.5h2M525 337.5h2M528 337.5h1M530 337.5h1M532 337.5h2M535 337.5h1M537 337.5h2M541 337.5h2M544 337.5h1M546 337.5h2M549 337.5h1M551 337.5h3M555 337.5h1M557 337.5h2M560 337.5h1M562 337.5h2M566 337.5h2M569 337.5h1M571 337.5h2M574 337.5h1M576 337.5h1M578 337.5h2M582 337.5h2M585 337.5h1M587 337.5h1M590 337.5h2M593 337.5h1M596 337.5h1M598 337.5h1M601 337.5h1M603 337.5h1M605 337.5h1M607 337.5h1M610 337.5h1M612 337.5h1M615 337.5h1M617 337.5h1M620 337.5h1M623 337.5h1M627 337.5h1M630 337.5h1M634 337.5h2M469 338.5h1M473 338.5h1M476 338.5h1M480 338.5h1M483 338.5h1M486 338.5h1M488 338.5h1M491 338.5h1M494 338.5h1M497 338.5h2M501 338.5h1M503 338.5h1M506 338.5h1M508 338.5h1M510 338.5h1M512 338.5h1M514 338.5h1M517 338.5h2M520 338.5h1M522 338.5h1M524 338.5h1M526 338.5h1M528 338.5h1M530 338.5h1M532 338.5h2M535 338.5h1M537 338.5h2M541 338.5h3M545 338.5h1M547 338.5h2M550 338.5h1M552 338.5h1M554 338.5h1M556 338.5h2M559 338.5h1M561 338.5h3M566 338.5h2M569 338.5h1M571 338.5h2M574 338.5h1M576 338.5h1M578 338.5h1M580 338.5h1M582 338.5h1M584 338.5h1M586 338.5h2M590 338.5h1M592 338.5h1M594 338.5h1M596 338.5h1M598 338.5h1M601 338.5h1M603 338.5h1M606 338.5h2M610 338.5h1M613 338.5h1M616 338.5h1M618 338.5h1M621 338.5h1M624 338.5h1M628 338.5h1M631 338.5h1M635 338.5h1M470 339.5h1M472 339.5h1M475 339.5h1M479 339.5h1M482 339.5h1M485 339.5h1M487 339.5h1M490 339.5h1M493 339.5h1M496 339.5h1M498 339.5h1M500 339.5h1M502 339.5h1M505 339.5h1M507 339.5h1M509 339.5h1M512 339.5h2M516 339.5h1M518 339.5h1M520 339.5h1M522 339.5h1M524 339.5h1M526 339.5h2M530 339.5h2M533 339.5h2M537 339.5h2M540 339.5h1M542 339.5h2M545 339.5h1M547 339.5h2M550 339.5h1M552 339.5h1M554 339.5h1M556 339.5h2M559 339.5h1M561 339.5h2M564 339.5h1M566 339.5h2M570 339.5h2M573 339.5h2M577 339.5h2M580 339.5h1M582 339.5h1M584 339.5h1M586 339.5h1M588 339.5h1M591 339.5h2M595 339.5h1M597 339.5h1M599 339.5h1M602 339.5h1M604 339.5h1M606 339.5h1M608 339.5h1M611 339.5h1M614 339.5h1M617 339.5h1M619 339.5h1M622 339.5h1M625 339.5h1M629 339.5h1M632 339.5h1M634 339.5h1M471 340.5h1M474 340.5h1M478 340.5h1M481 340.5h1M484 340.5h1M486 340.5h1M489 340.5h1M492 340.5h1M495 340.5h1M497 340.5h1M499 340.5h1M502 340.5h1M505 340.5h2M509 340.5h1M511 340.5h1M513 340.5h1M516 340.5h2M519 340.5h1M521 340.5h1M524 340.5h2M527 340.5h1M529 340.5h1M531 340.5h2M534 340.5h1M536 340.5h1M538 340.5h1M540 340.5h1M542 340.5h2M545 340.5h1M547 340.5h2M550 340.5h1M552 340.5h1M554 340.5h1M556 340.5h2M559 340.5h1M561 340.5h2M564 340.5h1M566 340.5h1M568 340.5h1M570 340.5h1M572 340.5h2M575 340.5h1M577 340.5h1M579 340.5h2M583 340.5h1M585 340.5h1M587 340.5h2M591 340.5h1M593 340.5h1M595 340.5h1M598 340.5h2M602 340.5h1M605 340.5h1M607 340.5h1M609 340.5h1M612 340.5h1M615 340.5h1M618 340.5h1M620 340.5h1M623 340.5h1M626 340.5h1M630 340.5h1M633 340.5h1M471 341.5h1M473 341.5h1M477 341.5h1M480 341.5h1M483 341.5h1M485 341.5h1M488 341.5h1M491 341.5h1M494 341.5h1M496 341.5h1M499 341.5h1M501 341.5h1M504 341.5h1M506 341.5h1M508 341.5h1M511 341.5h2M515 341.5h1M517 341.5h1M519 341.5h1M521 341.5h1M523 341.5h1M525 341.5h1M527 341.5h1M529 341.5h1M531 341.5h2M534 341.5h1M536 341.5h1M538 341.5h1M540 341.5h2M543 341.5h1M545 341.5h1M547 341.5h2M550 341.5h1M552 341.5h1M554 341.5h1M556 341.5h2M559 341.5h1M561 341.5h1M563 341.5h2M566 341.5h1M568 341.5h1M570 341.5h1M572 341.5h2M575 341.5h1M577 341.5h1M579 341.5h1M581 341.5h1M583 341.5h1M585 341.5h1M587 341.5h1M589 341.5h1M592 341.5h2M596 341.5h1M598 341.5h1M600 341.5h1M603 341.5h1M605 341.5h1M608 341.5h1M610 341.5h1M613 341.5h1M616 341.5h1M619 341.5h1M621 341.5h1M624 341.5h1M627 341.5h1M631 341.5h2M472 342.5h1M476 342.5h1M479 342.5h1M482 342.5h1M484 342.5h1M487 342.5h1M491 342.5h1M494 342.5h2M498 342.5h1M500 342.5h1M503 342.5h1M505 342.5h1M508 342.5h1M510 342.5h1M512 342.5h1M515 342.5h2M518 342.5h1M520 342.5h1M523 342.5h1M525 342.5h2M529 342.5h2M532 342.5h1M534 342.5h1M536 342.5h1M538 342.5h1M540 342.5h2M543 342.5h1M545 342.5h1M547 342.5h2M550 342.5h1M552 342.5h1M554 342.5h1M556 342.5h2M559 342.5h1M561 342.5h1M563 342.5h2M566 342.5h1M568 342.5h1M570 342.5h1M572 342.5h1M574 342.5h2M578 342.5h2M581 342.5h1M584 342.5h1M586 342.5h1M588 342.5h2M592 342.5h1M594 342.5h1M596 342.5h1M599 342.5h1M601 342.5h1M604 342.5h1M606 342.5h1M609 342.5h2M613 342.5h1M617 342.5h1M620 342.5h1M622 342.5h1M625 342.5h1M628 342.5h1M632 342.5h1M473 343.5h1M475 343.5h1M478 343.5h1M481 343.5h1M483 343.5h1M487 343.5h1M490 343.5h1M493 343.5h1M495 343.5h1M497 343.5h1M500 343.5h1M503 343.5h1M505 343.5h1M507 343.5h1M510 343.5h2M514 343.5h1M516 343.5h1M518 343.5h1M520 343.5h1M522 343.5h1M524 343.5h1M526 343.5h1M528 343.5h1M530 343.5h1M532 343.5h1M534 343.5h1M536 343.5h2M540 343.5h2M543 343.5h1M545 343.5h1M547 343.5h2M550 343.5h1M552 343.5h1M554 343.5h1M556 343.5h2M559 343.5h1M561 343.5h1M563 343.5h2M567 343.5h2M570 343.5h1M572 343.5h1M574 343.5h1M576 343.5h1M578 343.5h1M580 343.5h1M582 343.5h1M584 343.5h1M586 343.5h1M588 343.5h1M590 343.5h1M593 343.5h2M597 343.5h1M599 343.5h1M601 343.5h1M604 343.5h1M607 343.5h1M609 343.5h1M611 343.5h1M614 343.5h1M617 343.5h1M621 343.5h1M623 343.5h1M626 343.5h1M629 343.5h1M631 343.5h1M474 344.5h1M477 344.5h1M481 344.5h2M486 344.5h1M489 344.5h1M492 344.5h1M494 344.5h1M497 344.5h1M499 344.5h1M502 344.5h1M504 344.5h1M506 344.5h1M509 344.5h1M511 344.5h1M514 344.5h2M517 344.5h1M520 344.5h1M522 344.5h1M524 344.5h1M526 344.5h1M528 344.5h1M530 344.5h2M533 344.5h1M535 344.5h1M537 344.5h1M540 344.5h2M543 344.5h1M545 344.5h1M547 344.5h2M550 344.5h1M552 344.5h1M554 344.5h1M556 344.5h2M559 344.5h1M561 344.5h1M563 344.5h2M567 344.5h1M569 344.5h1M571 344.5h1M573 344.5h2M576 344.5h1M578 344.5h1M580 344.5h1M582 344.5h1M584 344.5h1M587 344.5h1M589 344.5h2M593 344.5h1M595 344.5h1M598 344.5h1M600 344.5h1M602 344.5h1M605 344.5h1M607 344.5h1M610 344.5h1M612 344.5h1M615 344.5h1M618 344.5h1M622 344.5h2M627 344.5h1M630 344.5h1M474 345.5h1M476 345.5h1M480 345.5h1M482 345.5h1M485 345.5h1M488 345.5h1M491 345.5h1M493 345.5h1M496 345.5h1M498 345.5h1M501 345.5h1M503 345.5h1M506 345.5h1M509 345.5h2M513 345.5h1M515 345.5h1M517 345.5h1M519 345.5h1M522 345.5h1M524 345.5h2M528 345.5h1M530 345.5h2M533 345.5h1M535 345.5h1M537 345.5h1M539 345.5h1M541 345.5h1M543 345.5h1M545 345.5h2M548 345.5h1M550 345.5h1M552 345.5h1M554 345.5h1M556 345.5h1M558 345.5h2M561 345.5h1M563 345.5h1M565 345.5h1M567 345.5h1M569 345.5h1M571 345.5h1M573 345.5h2M576 345.5h1M579 345.5h2M582 345.5h1M585 345.5h1M587 345.5h1M589 345.5h1M591 345.5h1M594 345.5h2M598 345.5h1M601 345.5h1M603 345.5h1M606 345.5h1M608 345.5h1M611 345.5h1M613 345.5h1M616 345.5h1M619 345.5h1M622 345.5h1M624 345.5h1M628 345.5h2M475 346.5h1M479 346.5h1M481 346.5h1M484 346.5h1M487 346.5h1M491 346.5h2M495 346.5h1M498 346.5h1M501 346.5h1M503 346.5h1M505 346.5h1M508 346.5h1M510 346.5h1M513 346.5h1M515 346.5h1M517 346.5h1M519 346.5h1M521 346.5h1M523 346.5h1M525 346.5h1M527 346.5h1M529 346.5h1M531 346.5h1M533 346.5h1M535 346.5h1M537 346.5h1M539 346.5h1M541 346.5h1M543 346.5h1M545 346.5h2M548 346.5h1M550 346.5h1M552 346.5h1M554 346.5h1M556 346.5h1M558 346.5h2M561 346.5h1M563 346.5h1M565 346.5h1M567 346.5h1M569 346.5h1M571 346.5h1M573 346.5h1M575 346.5h1M577 346.5h1M579 346.5h1M581 346.5h1M583 346.5h1M585 346.5h1M587 346.5h1M589 346.5h1M591 346.5h1M594 346.5h1M596 346.5h1M599 346.5h1M601 346.5h1M603 346.5h1M606 346.5h1M609 346.5h1M612 346.5h2M617 346.5h1M620 346.5h1M623 346.5h1M625 346.5h1M629 346.5h1M476 347.5h1M478 347.5h1M480 347.5h1M483 347.5h1M487 347.5h1M490 347.5h1M492 347.5h1M494 347.5h1M497 347.5h1M500 347.5h1M502 347.5h1M505 347.5h1M508 347.5h2M512 347.5h1M514 347.5h1M516 347.5h1M518 347.5h1M521 347.5h1M523 347.5h1M525 347.5h1M527 347.5h1M529 347.5h1M531 347.5h1M533 347.5h1M535 347.5h1M537 347.5h1M539 347.5h1M541 347.5h1M543 347.5h1M545 347.5h2M548 347.5h1M550 347.5h1M552 347.5h1M554 347.5h1M556 347.5h1M558 347.5h2M561 347.5h1M563 347.5h1M565 347.5h1M567 347.5h1M569 347.5h1M571 347.5h1M573 347.5h1M575 347.5h1M577 347.5h1M579 347.5h1M581 347.5h1M583 347.5h1M586 347.5h1M588 347.5h1M590 347.5h1M592 347.5h1M595 347.5h2M599 347.5h1M602 347.5h1M604 347.5h1M607 347.5h1M610 347.5h1M612 347.5h1M614 347.5h1M617 347.5h1M621 347.5h1M624 347.5h1M626 347.5h1M628 347.5h1M477 348.5h1M479 348.5h1M482 348.5h1M486 348.5h1M489 348.5h1M491 348.5h1M494 348.5h1M496 348.5h1M499 348.5h1M502 348.5h1M504 348.5h1M507 348.5h1M509 348.5h1M512 348.5h1M514 348.5h1M516 348.5h1M518 348.5h1M520 348.5h1M523 348.5h2M527 348.5h1M529 348.5h2M532 348.5h1M535 348.5h2M539 348.5h2M542 348.5h1M544 348.5h1M546 348.5h1M548 348.5h1M550 348.5h1M552 348.5h1M554 348.5h1M556 348.5h1M558 348.5h1M560 348.5h1M562 348.5h1M564 348.5h2M568 348.5h2M572 348.5h1M574 348.5h2M577 348.5h1M580 348.5h2M584 348.5h1M586 348.5h1M588 348.5h1M590 348.5h1M592 348.5h1M595 348.5h1M597 348.5h1M600 348.5h1M602 348.5h1M605 348.5h1M608 348.5h1M610 348.5h1M613 348.5h1M615 348.5h1M618 348.5h1M622 348.5h1M625 348.5h1M627 348.5h1M478 349.5h1M482 349.5h1M485 349.5h1M488 349.5h1M490 349.5h1M493 349.5h1M496 349.5h1M499 349.5h1M501 349.5h1M504 349.5h1M507 349.5h2M511 349.5h1M513 349.5h1M515 349.5h1M518 349.5h1M520 349.5h1M522 349.5h1M524 349.5h1M526 349.5h1M528 349.5h1M530 349.5h1M532 349.5h1M534 349.5h1M536 349.5h1M539 349.5h2M542 349.5h1M544 349.5h1M546 349.5h1M548 349.5h1M550 349.5h1M552 349.5h1M554 349.5h1M556 349.5h1M558 349.5h1M560 349.5h1M562 349.5h1M564 349.5h2M568 349.5h1M570 349.5h1M572 349.5h1M574 349.5h1M576 349.5h1M578 349.5h1M580 349.5h1M582 349.5h1M584 349.5h1M586 349.5h1M589 349.5h1M591 349.5h1M593 349.5h1M596 349.5h2M600 349.5h1M603 349.5h1M605 349.5h1M608 349.5h1M611 349.5h1M614 349.5h1M616 349.5h1M619 349.5h1M622 349.5h1M626 349.5h1M479 350.5h1M481 350.5h1M484 350.5h1M488 350.5h2M492 350.5h1M495 350.5h1M498 350.5h1M500 350.5h1M503 350.5h1M506 350.5h1M508 350.5h1M511 350.5h1M513 350.5h1M515 350.5h1M517 350.5h1M520 350.5h1M522 350.5h1M524 350.5h1M526 350.5h1M528 350.5h1M530 350.5h1M532 350.5h1M534 350.5h1M536 350.5h1M539 350.5h2M542 350.5h1M544 350.5h1M546 350.5h1M548 350.5h1M550 350.5h1M552 350.5h1M554 350.5h1M556 350.5h1M558 350.5h1M560 350.5h1M562 350.5h1M564 350.5h2M568 350.5h1M570 350.5h1M572 350.5h1M574 350.5h1M576 350.5h1M578 350.5h1M580 350.5h1M582 350.5h1M584 350.5h1M587 350.5h1M589 350.5h1M591 350.5h1M593 350.5h1M596 350.5h1M598 350.5h1M601 350.5h1M604 350.5h1M606 350.5h1M609 350.5h1M612 350.5h1M615 350.5h2M620 350.5h1M623 350.5h1M625 350.5h1M480 351.5h1M484 351.5h1M487 351.5h1M489 351.5h1M492 351.5h1M494 351.5h1M497 351.5h1M500 351.5h1M502 351.5h1M505 351.5h1M507 351.5h1M510 351.5h1M512 351.5h1M514 351.5h1M517 351.5h1M519 351.5h1M522 351.5h2M526 351.5h1M528 351.5h1M530 351.5h1M532 351.5h1M534 351.5h1M536 351.5h1M538 351.5h1M540 351.5h1M542 351.5h1M544 351.5h1M546 351.5h1M548 351.5h1M550 351.5h1M552 351.5h1M554 351.5h1M556 351.5h1M558 351.5h1M560 351.5h1M562 351.5h1M564 351.5h1M566 351.5h1M568 351.5h1M570 351.5h1M572 351.5h1M574 351.5h1M576 351.5h1M578 351.5h1M581 351.5h2M585 351.5h1M587 351.5h1M590 351.5h1M592 351.5h1M594 351.5h1M597 351.5h1M599 351.5h1M602 351.5h1M604 351.5h1M607 351.5h1M610 351.5h1M612 351.5h1M615 351.5h1M617 351.5h1M620 351.5h1M624 351.5h1M481 352.5h1M483 352.5h1M486 352.5h1M488 352.5h1M491 352.5h1M494 352.5h1M497 352.5h1M499 352.5h1M502 352.5h1M505 352.5h1M507 352.5h1M510 352.5h1M512 352.5h1M514 352.5h1M516 352.5h1M519 352.5h1M521 352.5h1M523 352.5h1M525 352.5h1M528 352.5h2M532 352.5h1M534 352.5h1M536 352.5h1M538 352.5h1M540 352.5h1M542 352.5h1M544 352.5h1M546 352.5h1M548 352.5h1M550 352.5h1M552 352.5h1M554 352.5h1M556 352.5h1M558 352.5h1M560 352.5h1M562 352.5h1M564 352.5h1M566 352.5h1M568 352.5h1M570 352.5h1M572 352.5h1M575 352.5h2M579 352.5h1M581 352.5h1M583 352.5h1M585 352.5h1M588 352.5h1M590 352.5h1M592 352.5h1M594 352.5h1M597 352.5h1M599 352.5h1M602 352.5h1M605 352.5h1M607 352.5h1M610 352.5h1M613 352.5h1M616 352.5h1M618 352.5h1M621 352.5h1M623 352.5h1M482 353.5h1M485 353.5h1M487 353.5h1M490 353.5h1M493 353.5h1M496 353.5h1M498 353.5h1M501 353.5h1M504 353.5h1M506 353.5h1M509 353.5h1M511 353.5h1M513 353.5h1M516 353.5h1M518 353.5h1M521 353.5h1M523 353.5h1M525 353.5h1M527 353.5h1M529 353.5h1M531 353.5h1M533 353.5h1M536 353.5h1M538 353.5h1M540 353.5h1M542 353.5h1M544 353.5h1M546 353.5h1M548 353.5h1M550 353.5h1M552 353.5h1M554 353.5h1M556 353.5h1M558 353.5h1M560 353.5h1M562 353.5h1M564 353.5h1M566 353.5h1M568 353.5h1M571 353.5h1M573 353.5h1M575 353.5h1M577 353.5h1M579 353.5h1M581 353.5h1M583 353.5h1M586 353.5h1M588 353.5h1M591 353.5h1M593 353.5h1M595 353.5h1M598 353.5h1M600 353.5h1M603 353.5h1M606 353.5h1M608 353.5h1M611 353.5h1M614 353.5h1M617 353.5h1M619 353.5h1M622 353.5h1M483 354.5h1M485 354.5h2M490 354.5h1M492 354.5h1M496 354.5h1M498 354.5h1M501 354.5h1M504 354.5h1M506 354.5h1M509 354.5h1M511 354.5h1M513 354.5h1M516 354.5h1M518 354.5h1M521 354.5h2M525 354.5h1M527 354.5h1M529 354.5h1M531 354.5h1M533 354.5h1M535 354.5h1M538 354.5h1M540 354.5h1M542 354.5h1M544 354.5h1M546 354.5h1M548 354.5h1M550 354.5h1M552 354.5h1M554 354.5h1M556 354.5h1M558 354.5h1M560 354.5h1M562 354.5h1M564 354.5h1M566 354.5h1M569 354.5h1M571 354.5h1M573 354.5h1M575 354.5h1M577 354.5h1M579 354.5h1M582 354.5h2M586 354.5h1M588 354.5h1M591 354.5h1M593 354.5h1M595 354.5h1M598 354.5h1M600 354.5h1M603 354.5h1M606 354.5h1M608 354.5h1M612 354.5h1M614 354.5h1M618 354.5h2M621 354.5h1M484 355.5h1M486 355.5h1M489 355.5h1M492 355.5h1M495 355.5h1M497 355.5h1M500 355.5h1M503 355.5h1M505 355.5h1M508 355.5h1M510 355.5h1M513 355.5h1M515 355.5h1M518 355.5h1M520 355.5h1M522 355.5h1M524 355.5h1M527 355.5h1M529 355.5h1M531 355.5h1M533 355.5h1M535 355.5h1M538 355.5h2M542 355.5h1M544 355.5h1M546 355.5h1M548 355.5h1M550 355.5h1M552 355.5h1M554 355.5h1M556 355.5h1M558 355.5h1M560 355.5h1M562 355.5h1M565 355.5h2M569 355.5h1M571 355.5h1M573 355.5h1M575 355.5h1M577 355.5h1M580 355.5h1M582 355.5h1M584 355.5h1M586 355.5h1M589 355.5h1M591 355.5h1M594 355.5h1M596 355.5h1M599 355.5h1M601 355.5h1M604 355.5h1M607 355.5h1M609 355.5h1M612 355.5h1M615 355.5h1M618 355.5h1M620 355.5h1M485 356.5h1M488 356.5h1M491 356.5h1M494 356.5h1M497 356.5h1M500 356.5h1M503 356.5h1M505 356.5h1M508 356.5h1M510 356.5h1M512 356.5h1M515 356.5h1M517 356.5h1M520 356.5h1M522 356.5h1M524 356.5h1M527 356.5h2M531 356.5h1M533 356.5h1M535 356.5h1M538 356.5h2M542 356.5h1M544 356.5h1M546 356.5h1M548 356.5h1M550 356.5h1M552 356.5h1M554 356.5h1M556 356.5h1M558 356.5h1M560 356.5h1M562 356.5h1M565 356.5h2M569 356.5h1M571 356.5h1M573 356.5h1M576 356.5h2M580 356.5h1M582 356.5h1M584 356.5h1M587 356.5h1M589 356.5h1M592 356.5h1M594 356.5h1M596 356.5h1M599 356.5h1M601 356.5h1M604 356.5h1M607 356.5h1M610 356.5h1M613 356.5h1M616 356.5h1M619 356.5h1M486 357.5h1M488 357.5h1M490 357.5h1M494 357.5h1M496 357.5h1M499 357.5h1M502 357.5h1M504 357.5h1M507 357.5h1M510 357.5h1M512 357.5h1M514 357.5h1M517 357.5h1M520 357.5h2M524 357.5h1M526 357.5h1M528 357.5h1M530 357.5h1M533 357.5h1M535 357.5h1M538 357.5h2M541 357.5h1M543 357.5h1M546 357.5h1M548 357.5h1M550 357.5h1M552 357.5h1M554 357.5h1M556 357.5h1M558 357.5h1M561 357.5h1M563 357.5h1M565 357.5h2M569 357.5h1M571 357.5h1M574 357.5h1M576 357.5h1M578 357.5h1M580 357.5h1M583 357.5h2M587 357.5h1M590 357.5h1M592 357.5h1M594 357.5h1M597 357.5h1M600 357.5h1M602 357.5h1M605 357.5h1M608 357.5h1M610 357.5h1M614 357.5h1M616 357.5h1M618 357.5h1M487 358.5h2M490 358.5h1M493 358.5h1M495 358.5h1M498 358.5h1M502 358.5h1M504 358.5h1M507 358.5h1M509 358.5h1M511 358.5h1M514 358.5h1M516 358.5h1M519 358.5h1M521 358.5h1M523 358.5h1M526 358.5h1M528 358.5h1M530 358.5h1M532 358.5h1M535 358.5h1M537 358.5h1M539 358.5h1M541 358.5h1M543 358.5h1M546 358.5h1M548 358.5h1M550 358.5h1M552 358.5h1M554 358.5h1M556 358.5h1M558 358.5h1M561 358.5h1M563 358.5h1M565 358.5h1M567 358.5h1M569 358.5h1M572 358.5h1M574 358.5h1M576 358.5h1M578 358.5h1M581 358.5h1M583 358.5h1M585 358.5h1M588 358.5h1M590 358.5h1M593 358.5h1M595 358.5h1M597 358.5h1M600 358.5h1M602 358.5h1M606 358.5h1M609 358.5h1M611 358.5h1M614 358.5h1M617 358.5h1M489 359.5h1M492 359.5h1M495 359.5h1M498 359.5h1M501 359.5h1M503 359.5h1M506 359.5h1M509 359.5h1M511 359.5h1M514 359.5h1M516 359.5h1M519 359.5h1M521 359.5h1M523 359.5h1M526 359.5h1M528 359.5h1M530 359.5h1M532 359.5h1M534 359.5h1M537 359.5h1M539 359.5h1M541 359.5h1M543 359.5h1M545 359.5h1M548 359.5h1M550 359.5h1M552 359.5h1M554 359.5h1M556 359.5h1M559 359.5h1M561 359.5h1M563 359.5h1M565 359.5h1M567 359.5h1M570 359.5h1M572 359.5h1M574 359.5h1M576 359.5h1M578 359.5h1M581 359.5h1M583 359.5h1M585 359.5h1M588 359.5h1M590 359.5h1M593 359.5h1M595 359.5h1M598 359.5h1M601 359.5h1M603 359.5h1M606 359.5h1M609 359.5h1M612 359.5h1M615 359.5h2M490 360.5h1M492 360.5h1M494 360.5h1M497 360.5h1M501 360.5h1M503 360.5h1M506 360.5h1M508 360.5h1M510 360.5h1M513 360.5h1M516 360.5h1M518 360.5h1M520 360.5h1M523 360.5h1M525 360.5h1M527 360.5h1M530 360.5h1M532 360.5h1M534 360.5h1M537 360.5h1M539 360.5h1M541 360.5h1M543 360.5h1M545 360.5h1M548 360.5h1M550 360.5h1M552 360.5h1M554 360.5h1M556 360.5h1M559 360.5h1M561 360.5h1M563 360.5h1M565 360.5h1M567 360.5h1M570 360.5h1M572 360.5h1M574 360.5h1M577 360.5h1M579 360.5h1M581 360.5h1M584 360.5h1M586 360.5h1M588 360.5h1M591 360.5h1M594 360.5h1M596 360.5h1M598 360.5h1M601 360.5h1M603 360.5h1M607 360.5h1M610 360.5h1M612 360.5h1M614 360.5h1M491 361.5h2M494 361.5h1M497 361.5h1M500 361.5h1M502 361.5h1M505 361.5h1M508 361.5h1M510 361.5h1M513 361.5h1M515 361.5h1M518 361.5h1M520 361.5h1M522 361.5h1M525 361.5h1M527 361.5h1M530 361.5h1M532 361.5h1M534 361.5h1M537 361.5h1M539 361.5h1M541 361.5h1M543 361.5h1M545 361.5h1M548 361.5h1M550 361.5h1M552 361.5h1M554 361.5h1M556 361.5h1M559 361.5h1M561 361.5h1M563 361.5h1M565 361.5h1M567 361.5h1M570 361.5h1M572 361.5h1M574 361.5h1M577 361.5h1M579 361.5h1M582 361.5h1M584 361.5h1M586 361.5h1M589 361.5h1M591 361.5h1M594 361.5h1M596 361.5h1M599 361.5h1M602 361.5h1M604 361.5h1M607 361.5h1M610 361.5h1M613 361.5h1M493 362.5h1M496 362.5h1M500 362.5h1M502 362.5h1M505 362.5h1M507 362.5h1M510 362.5h1M513 362.5h1M515 362.5h1M518 362.5h1M520 362.5h1M522 362.5h1M525 362.5h1M527 362.5h1M529 362.5h1M531 362.5h1M534 362.5h1M537 362.5h2M541 362.5h1M543 362.5h1M545 362.5h1M548 362.5h1M550 362.5h1M552 362.5h1M554 362.5h1M556 362.5h1M559 362.5h1M561 362.5h1M563 362.5h1M566 362.5h2M570 362.5h1M573 362.5h1M575 362.5h1M577 362.5h1M579 362.5h1M582 362.5h1M584 362.5h1M586 362.5h1M589 362.5h1M591 362.5h1M594 362.5h1M597 362.5h1M599 362.5h1M602 362.5h1M604 362.5h1M608 362.5h1M611 362.5h2M494 363.5h1M496 363.5h1M499 363.5h1M501 363.5h1M504 363.5h1M507 363.5h1M509 363.5h1M512 363.5h1M515 363.5h1M517 363.5h1M520 363.5h1M522 363.5h1M525 363.5h1M527 363.5h1M529 363.5h1M531 363.5h1M534 363.5h1M537 363.5h2M541 363.5h1M543 363.5h1M545 363.5h1M548 363.5h1M550 363.5h1M552 363.5h1M554 363.5h1M556 363.5h1M559 363.5h1M561 363.5h1M563 363.5h1M566 363.5h2M570 363.5h1M573 363.5h1M575 363.5h1M577 363.5h1M579 363.5h1M582 363.5h1M584 363.5h1M587 363.5h1M589 363.5h1M592 363.5h1M595 363.5h1M597 363.5h1M600 363.5h1M603 363.5h1M605 363.5h1M608 363.5h1M610 363.5h1M495 364.5h2M499 364.5h1M501 364.5h1M504 364.5h1M506 364.5h1M509 364.5h1M512 364.5h1M514 364.5h1M517 364.5h1M519 364.5h1M522 364.5h1M524 364.5h1M526 364.5h1M529 364.5h1M531 364.5h1M534 364.5h1M536 364.5h1M538 364.5h1M541 364.5h1M543 364.5h1M545 364.5h1M548 364.5h1M550 364.5h1M552 364.5h1M554 364.5h1M556 364.5h1M559 364.5h1M561 364.5h1M563 364.5h1M566 364.5h1M568 364.5h1M570 364.5h1M573 364.5h1M575 364.5h1M578 364.5h1M580 364.5h1M582 364.5h1M585 364.5h1M587 364.5h1M590 364.5h1M592 364.5h1M595 364.5h1M598 364.5h1M600 364.5h1M603 364.5h1M605 364.5h1M608 364.5h2M497 365.5h4M503 365.5h1M506 365.5h1M508 365.5h1M511 365.5h1M514 365.5h1M517 365.5h1M519 365.5h1M521 365.5h1M524 365.5h1M526 365.5h1M529 365.5h1M531 365.5h1M533 365.5h1M536 365.5h1M538 365.5h1M541 365.5h1M543 365.5h1M545 365.5h1M548 365.5h1M550 365.5h1M552 365.5h1M554 365.5h1M556 365.5h1M559 365.5h1M561 365.5h1M563 365.5h1M566 365.5h1M568 365.5h1M571 365.5h1M573 365.5h1M575 365.5h1M578 365.5h1M580 365.5h1M583 365.5h1M585 365.5h1M587 365.5h1M590 365.5h1M593 365.5h1M596 365.5h1M598 365.5h1M601 365.5h1M604 365.5h1M606 365.5h2M500 366.5h1M503 366.5h1M505 366.5h1M508 366.5h1M511 366.5h1M513 366.5h1M516 366.5h1M519 366.5h1M521 366.5h1M524 366.5h1M526 366.5h1M528 366.5h1M531 366.5h1M533 366.5h1M536 366.5h1M538 366.5h1M540 366.5h1M542 366.5h1M545 366.5h1M547 366.5h1M549 366.5h1M552 366.5h1M555 366.5h1M557 366.5h1M559 366.5h1M562 366.5h1M564 366.5h1M566 366.5h1M568 366.5h1M571 366.5h1M573 366.5h1M576 366.5h1M578 366.5h1M580 366.5h1M583 366.5h1M585 366.5h1M588 366.5h1M591 366.5h1M593 366.5h1M596 366.5h1M599 366.5h1M601 366.5h1M604 366.5h2M501 367.5h2M505 367.5h1M507 367.5h1M511 367.5h1M513 367.5h1M516 367.5h1M518 367.5h1M521 367.5h1M523 367.5h1M526 367.5h1M528 367.5h1M530 367.5h1M533 367.5h1M536 367.5h1M538 367.5h1M540 367.5h1M542 367.5h1M545 367.5h1M547 367.5h1M549 367.5h1M552 367.5h1M555 367.5h1M557 367.5h1M559 367.5h1M562 367.5h1M564 367.5h1M566 367.5h1M568 367.5h1M571 367.5h1M574 367.5h1M576 367.5h1M578 367.5h1M581 367.5h1M583 367.5h1M586 367.5h1M588 367.5h1M591 367.5h1M593 367.5h1M597 367.5h1M599 367.5h1M602 367.5h2M502 368.5h3M507 368.5h1M510 368.5h1M513 368.5h1M516 368.5h1M518 368.5h1M520 368.5h1M523 368.5h1M525 368.5h1M528 368.5h1M530 368.5h1M533 368.5h1M536 368.5h1M538 368.5h1M540 368.5h1M542 368.5h1M545 368.5h1M547 368.5h1M549 368.5h1M552 368.5h1M555 368.5h1M557 368.5h1M559 368.5h1M562 368.5h1M564 368.5h1M566 368.5h1M568 368.5h1M571 368.5h1M574 368.5h1M576 368.5h1M579 368.5h1M581 368.5h1M584 368.5h1M586 368.5h1M588 368.5h1M591 368.5h1M594 368.5h1M597 368.5h1M600 368.5h1M602 368.5h1M504 369.5h3M510 369.5h1M512 369.5h1M515 369.5h1M518 369.5h1M520 369.5h1M523 369.5h1M525 369.5h1M528 369.5h1M530 369.5h1M533 369.5h1M536 369.5h2M540 369.5h1M542 369.5h1M545 369.5h1M547 369.5h1M549 369.5h1M552 369.5h1M555 369.5h1M557 369.5h1M559 369.5h1M562 369.5h1M564 369.5h1M567 369.5h2M571 369.5h1M574 369.5h1M576 369.5h1M579 369.5h1M581 369.5h1M584 369.5h1M586 369.5h1M589 369.5h1M592 369.5h1M594 369.5h1M598 369.5h1M600 369.5h2M506 370.5h2M509 370.5h1M512 370.5h1M515 370.5h1M517 370.5h1M520 370.5h1M523 370.5h1M525 370.5h1M528 370.5h1M530 370.5h1M532 370.5h1M535 370.5h1M537 370.5h1M540 370.5h1M542 370.5h1M545 370.5h1M547 370.5h1M549 370.5h1M552 370.5h1M555 370.5h1M557 370.5h1M559 370.5h1M562 370.5h1M564 370.5h1M567 370.5h1M569 370.5h1M572 370.5h1M574 370.5h1M576 370.5h1M579 370.5h1M581 370.5h1M584 370.5h1M587 370.5h1M589 370.5h1M592 370.5h1M595 370.5h1M597 370.5h3M508 371.5h4M515 371.5h1M517 371.5h1M519 371.5h1M522 371.5h1M525 371.5h1M527 371.5h1M530 371.5h1M532 371.5h1M535 371.5h1M537 371.5h1M540 371.5h1M542 371.5h1M545 371.5h1M547 371.5h1M549 371.5h1M552 371.5h1M555 371.5h1M557 371.5h1M559 371.5h1M562 371.5h1M564 371.5h1M567 371.5h1M569 371.5h1M572 371.5h1M574 371.5h1M577 371.5h1M579 371.5h1M582 371.5h1M585 371.5h1M587 371.5h1M589 371.5h1M593 371.5h1M595 371.5h2M511 372.5h2M514 372.5h1M517 372.5h1M519 372.5h1M522 372.5h1M524 372.5h1M527 372.5h1M529 372.5h1M532 372.5h1M535 372.5h1M537 372.5h1M540 372.5h1M542 372.5h1M545 372.5h1M547 372.5h1M549 372.5h1M552 372.5h1M555 372.5h1M557 372.5h1M559 372.5h1M562 372.5h1M564 372.5h1M567 372.5h1M569 372.5h1M572 372.5h1M575 372.5h1M577 372.5h1M580 372.5h1M582 372.5h1M585 372.5h1M587 372.5h1M590 372.5h1M592 372.5h3M513 373.5h4M519 373.5h1M522 373.5h1M524 373.5h1M527 373.5h1M529 373.5h1M532 373.5h1M535 373.5h1M537 373.5h1M540 373.5h1M542 373.5h1M544 373.5h1M547 373.5h1M549 373.5h1M552 373.5h1M555 373.5h1M557 373.5h1M560 373.5h1M562 373.5h1M564 373.5h1M567 373.5h1M569 373.5h1M572 373.5h1M575 373.5h1M577 373.5h1M580 373.5h1M582 373.5h1M585 373.5h1M588 373.5h1M590 373.5h2M516 374.5h3M522 374.5h1M524 374.5h1M527 374.5h1M529 374.5h1M532 374.5h1M535 374.5h1M537 374.5h1M540 374.5h1M542 374.5h1M544 374.5h1M547 374.5h1M549 374.5h1M552 374.5h1M555 374.5h1M557 374.5h1M560 374.5h1M562 374.5h1M564 374.5h1M567 374.5h1M569 374.5h1M572 374.5h1M575 374.5h1M577 374.5h1M580 374.5h1M582 374.5h1M586 374.5h1M588 374.5h2M518 375.5h2M521 375.5h1M524 375.5h1M526 375.5h1M529 375.5h1M532 375.5h1M535 375.5h1M537 375.5h1M540 375.5h1M542 375.5h1M544 375.5h1M547 375.5h1M549 375.5h1M552 375.5h1M555 375.5h1M557 375.5h1M560 375.5h1M562 375.5h1M564 375.5h1M567 375.5h1M569 375.5h1M572 375.5h1M575 375.5h1M578 375.5h1M580 375.5h1M583 375.5h1M585 375.5h3M520 376.5h4M526 376.5h1M528 376.5h1M531 376.5h1M534 376.5h1M536 376.5h1M539 376.5h1M541 376.5h1M544 376.5h1M547 376.5h1M549 376.5h1M552 376.5h1M555 376.5h1M557 376.5h1M560 376.5h1M563 376.5h1M565 376.5h1M568 376.5h1M570 376.5h1M573 376.5h1M576 376.5h1M578 376.5h1M581 376.5h1M583 376.5h2M523 377.5h6M531 377.5h1M534 377.5h1M536 377.5h1M539 377.5h1M541 377.5h1M544 377.5h1M547 377.5h1M549 377.5h1M552 377.5h1M555 377.5h1M557 377.5h1M560 377.5h1M563 377.5h1M565 377.5h1M568 377.5h1M570 377.5h1M573 377.5h1M576 377.5h1M578 377.5h5M528 378.5h5M534 378.5h1M536 378.5h1M539 378.5h1M541 378.5h1M544 378.5h1M547 378.5h1M549 378.5h1M552 378.5h1M555 378.5h1M557 378.5h1M560 378.5h1M563 378.5h1M565 378.5h1M568 378.5h1M570 378.5h1M572 378.5h6M533 379.5h5M539 379.5h1M541 379.5h1M544 379.5h1M547 379.5h1M549 379.5h1M552 379.5h1M555 379.5h1M557 379.5h1M560 379.5h1M563 379.5h1M565 379.5h1M567 379.5h5M538 380.5h29" stroke="#c0c0c0" stroke-width="1" fill="none"/>
<ellipse cx="551.6" cy="263.6" rx="64.3" ry="59.95" fill="none" stroke="#ff0" stroke-width="1"/>
<ellipse cx="551.6" cy="263.6" rx="78.08" ry="72.8" fill="none" stroke="#ff0" stroke-width="1"/>
<ellipse cx="551.6" cy="263.6" rx="91.86" ry="85.64" fill="none" stroke="#ff0" stroke-width="1"/>
<ellipse cx="551.6" cy="263.6" rx="105.64" ry="98.49" fill="none" stroke="#ff0" stroke-width="1"/>
<ellipse cx="551.6" cy="263.6" rx="119.42" ry="111.34" fill="none" stroke="#ff0" stroke-width="1"/>
<ellipse cx="551.6" cy="263.6" rx="133.2" ry="124.18" fill="none" stroke="#ff0" stroke-width="1"/>
<path d="M412 264.5 H693" stroke="#ff0" stroke-width="1" fill="none"/>
<path d="M592.5 213.66 A67.5 62.93 0 1 1 511.5 213.66 L515.1 218.13 A61.5 57.34 0 1 0 588.9 218.13 Z" fill="none" stroke="#f00" stroke-width="3" stroke-linejoin="miter"/>
<text stroke="#ff0" stroke-width="0.35" x="553" y="131" font-size="6" textLength="31" lengthAdjust="spacingAndGlyphs" fill="#ff0">Sig.b [MPa]</text>
<text stroke="#ff0" stroke-width="0.35" x="553.6" y="203.45" font-size="5.5" fill="#ff0">0</text>
<text stroke="#ff0" stroke-width="0.35" x="553.6" y="190.6" font-size="5.5" fill="#ff0">200</text>
<text stroke="#ff0" stroke-width="0.35" x="553.6" y="177.76" font-size="5.5" fill="#ff0">400</text>
<text stroke="#ff0" stroke-width="0.35" x="553.6" y="164.91" font-size="5.5" fill="#ff0">600</text>
<text stroke="#ff0" stroke-width="0.35" x="553.6" y="152.06" font-size="5.5" fill="#ff0">800</text>
<text stroke="#ff0" stroke-width="0.35" x="553.6" y="139.22" font-size="5.5" fill="#ff0">1000</text>
<text stroke="#0f0" stroke-width="0.35" x="428" y="149.3" font-size="7.6" textLength="57.5" lengthAdjust="spacingAndGlyphs" fill="#0f0">Sigma B = f (phi)</text>
<path d="M697 264.5 H978 M836.6 133 V395" stroke="#ff0" stroke-width="1" fill="none"/>
<path d="M765 176.5h1M907 176.5h1M765 177.5h2M906 177.5h1M908 177.5h1M764 178.5h1M767 178.5h1M905 178.5h1M908 178.5h1M763 179.5h1M765 179.5h1M767 179.5h1M905 179.5h1M907 179.5h1M909 179.5h1M763 180.5h1M766 180.5h1M768 180.5h1M904 180.5h1M906 180.5h1M909 180.5h1M762 181.5h1M766 181.5h1M769 181.5h1M903 181.5h1M906 181.5h1M910 181.5h1M761 182.5h1M763 182.5h1M767 182.5h1M770 182.5h1M902 182.5h1M905 182.5h1M909 182.5h1M911 182.5h1M760 183.5h1M764 183.5h1M768 183.5h1M771 183.5h1M901 183.5h1M904 183.5h1M908 183.5h1M912 183.5h1M760 184.5h2M765 184.5h1M769 184.5h1M771 184.5h1M901 184.5h1M903 184.5h1M907 184.5h1M911 184.5h2M759 185.5h1M762 185.5h1M766 185.5h1M770 185.5h1M772 185.5h1M900 185.5h1M902 185.5h1M906 185.5h1M910 185.5h1M913 185.5h1M759 186.5h1M763 186.5h1M766 186.5h1M771 186.5h1M773 186.5h1M899 186.5h1M901 186.5h1M906 186.5h1M909 186.5h1M913 186.5h1M758 187.5h1M760 187.5h1M764 187.5h1M767 187.5h1M771 187.5h1M774 187.5h1M898 187.5h1M901 187.5h1M905 187.5h1M908 187.5h1M912 187.5h1M914 187.5h1M757 188.5h1M761 188.5h1M765 188.5h1M768 188.5h1M772 188.5h1M775 188.5h1M897 188.5h1M900 188.5h1M904 188.5h1M907 188.5h1M911 188.5h1M915 188.5h1M756 189.5h1M758 189.5h1M762 189.5h1M766 189.5h1M769 189.5h1M773 189.5h1M775 189.5h1M897 189.5h1M899 189.5h1M903 189.5h1M906 189.5h1M910 189.5h1M914 189.5h1M916 189.5h1M755 190.5h1M759 190.5h1M763 190.5h1M767 190.5h1M770 190.5h1M774 190.5h1M776 190.5h1M896 190.5h1M898 190.5h1M902 190.5h1M905 190.5h1M909 190.5h1M913 190.5h1M917 190.5h1M755 191.5h2M760 191.5h1M764 191.5h1M768 191.5h1M771 191.5h1M775 191.5h1M777 191.5h1M895 191.5h1M897 191.5h1M901 191.5h1M904 191.5h1M908 191.5h1M912 191.5h1M916 191.5h1M918 191.5h1M754 192.5h1M757 192.5h1M761 192.5h1M765 192.5h1M768 192.5h1M772 192.5h1M775 192.5h1M778 192.5h1M894 192.5h1M897 192.5h1M900 192.5h1M904 192.5h1M907 192.5h1M911 192.5h1M915 192.5h1M918 192.5h1M753 193.5h1M755 193.5h1M758 193.5h1M762 193.5h1M766 193.5h1M769 193.5h1M773 193.5h1M776 193.5h1M779 193.5h1M893 193.5h1M896 193.5h1M899 193.5h1M903 193.5h1M906 193.5h1M910 193.5h1M914 193.5h1M917 193.5h1M919 193.5h1M753 194.5h1M756 194.5h1M759 194.5h1M763 194.5h1M767 194.5h1M770 194.5h1M774 194.5h1M777 194.5h1M779 194.5h1M893 194.5h1M895 194.5h1M898 194.5h1M902 194.5h1M905 194.5h1M909 194.5h1M913 194.5h1M916 194.5h1M919 194.5h1M752 195.5h1M757 195.5h1M760 195.5h2M764 195.5h1M768 195.5h1M771 195.5h1M774 195.5h1M778 195.5h1M780 195.5h1M892 195.5h1M894 195.5h1M898 195.5h1M901 195.5h1M904 195.5h1M908 195.5h1M911 195.5h2M915 195.5h1M920 195.5h1M752 196.5h2M758 196.5h2M762 196.5h1M765 196.5h1M769 196.5h1M772 196.5h1M775 196.5h1M779 196.5h1M781 196.5h1M891 196.5h1M893 196.5h1M897 196.5h1M900 196.5h1M903 196.5h1M907 196.5h1M910 196.5h1M913 196.5h2M919 196.5h1M921 196.5h1M751 197.5h1M754 197.5h2M760 197.5h1M763 197.5h1M766 197.5h1M770 197.5h1M773 197.5h1M776 197.5h1M780 197.5h1M782 197.5h1M890 197.5h1M892 197.5h1M896 197.5h1M899 197.5h1M902 197.5h1M906 197.5h1M909 197.5h1M912 197.5h1M917 197.5h2M921 197.5h1M751 198.5h2M756 198.5h1M761 198.5h1M764 198.5h1M767 198.5h1M771 198.5h1M774 198.5h1M777 198.5h1M780 198.5h1M783 198.5h1M889 198.5h1M892 198.5h1M895 198.5h1M898 198.5h1M901 198.5h1M905 198.5h1M908 198.5h1M911 198.5h1M916 198.5h1M920 198.5h1M922 198.5h1M750 199.5h1M753 199.5h2M757 199.5h1M762 199.5h1M765 199.5h1M768 199.5h1M772 199.5h1M775 199.5h1M778 199.5h1M781 199.5h1M783 199.5h1M889 199.5h1M891 199.5h1M894 199.5h1M897 199.5h1M900 199.5h1M904 199.5h1M907 199.5h1M910 199.5h1M915 199.5h1M918 199.5h2M922 199.5h1M750 200.5h3M755 200.5h1M758 200.5h1M763 200.5h1M766 200.5h1M769 200.5h1M773 200.5h1M776 200.5h1M779 200.5h1M782 200.5h1M784 200.5h1M888 200.5h1M890 200.5h1M893 200.5h1M896 200.5h1M899 200.5h1M903 200.5h1M906 200.5h1M909 200.5h1M914 200.5h1M917 200.5h1M920 200.5h3M749 201.5h1M753 201.5h1M756 201.5h1M759 201.5h2M764 201.5h1M767 201.5h1M770 201.5h1M774 201.5h1M777 201.5h1M780 201.5h1M783 201.5h1M785 201.5h1M887 201.5h1M889 201.5h1M892 201.5h1M895 201.5h1M898 201.5h1M902 201.5h1M905 201.5h1M908 201.5h1M912 201.5h2M916 201.5h1M919 201.5h1M923 201.5h1M749 202.5h1M754 202.5h1M757 202.5h2M761 202.5h1M765 202.5h1M768 202.5h1M771 202.5h1M775 202.5h1M778 202.5h1M781 202.5h1M784 202.5h1M786 202.5h1M886 202.5h1M888 202.5h1M891 202.5h1M894 202.5h1M897 202.5h1M901 202.5h1M904 202.5h1M907 202.5h1M911 202.5h1M914 202.5h2M918 202.5h1M923 202.5h1M749 203.5h3M755 203.5h2M759 203.5h1M762 203.5h1M766 203.5h1M769 203.5h1M772 203.5h1M775 203.5h1M779 203.5h1M782 203.5h1M785 203.5h1M787 203.5h1M885 203.5h1M887 203.5h1M890 203.5h1M893 203.5h1M897 203.5h1M900 203.5h1M903 203.5h1M906 203.5h1M910 203.5h1M913 203.5h1M916 203.5h2M921 203.5h2M924 203.5h1M748 204.5h1M752 204.5h1M757 204.5h1M760 204.5h1M763 204.5h1M767 204.5h2M770 204.5h1M773 204.5h2M776 204.5h1M780 204.5h1M783 204.5h1M785 204.5h1M787 204.5h1M885 204.5h1M887 204.5h1M889 204.5h1M892 204.5h1M896 204.5h1M898 204.5h2M902 204.5h1M904 204.5h2M909 204.5h1M912 204.5h1M915 204.5h1M920 204.5h1M924 204.5h1M748 205.5h3M753 205.5h2M758 205.5h1M761 205.5h1M764 205.5h2M769 205.5h1M771 205.5h1M775 205.5h1M777 205.5h1M781 205.5h1M783 205.5h1M786 205.5h1M788 205.5h1M884 205.5h1M886 205.5h1M889 205.5h1M891 205.5h1M895 205.5h1M897 205.5h1M901 205.5h1M903 205.5h1M907 205.5h2M911 205.5h1M914 205.5h1M918 205.5h2M922 205.5h3M747 206.5h1M751 206.5h1M755 206.5h1M759 206.5h2M762 206.5h2M766 206.5h1M770 206.5h1M772 206.5h2M776 206.5h1M778 206.5h1M782 206.5h1M784 206.5h1M787 206.5h1M789 206.5h1M883 206.5h1M885 206.5h1M888 206.5h1M890 206.5h1M894 206.5h1M896 206.5h1M899 206.5h2M902 206.5h1M906 206.5h1M909 206.5h2M912 206.5h2M917 206.5h1M921 206.5h1M925 206.5h1M747 207.5h1M752 207.5h2M756 207.5h1M761 207.5h1M764 207.5h1M767 207.5h1M771 207.5h1M774 207.5h1M777 207.5h1M779 207.5h1M783 207.5h1M785 207.5h1M788 207.5h1M790 207.5h1M882 207.5h1M884 207.5h1M887 207.5h1M889 207.5h1M893 207.5h1M895 207.5h1M898 207.5h1M901 207.5h1M905 207.5h1M908 207.5h1M911 207.5h1M916 207.5h1M919 207.5h2M925 207.5h1M747 208.5h3M754 208.5h1M757 208.5h2M762 208.5h1M765 208.5h1M768 208.5h1M772 208.5h1M775 208.5h1M778 208.5h1M780 208.5h1M784 208.5h1M786 208.5h1M789 208.5h1M791 208.5h1M881 208.5h1M883 208.5h1M886 208.5h1M888 208.5h1M892 208.5h1M894 208.5h1M897 208.5h1M900 208.5h1M904 208.5h1M907 208.5h1M910 208.5h1M914 208.5h2M918 208.5h1M923 208.5h2M926 208.5h1M746 209.5h1M750 209.5h1M755 209.5h1M759 209.5h1M763 209.5h2M766 209.5h2M769 209.5h2M773 209.5h1M776 209.5h1M779 209.5h1M781 209.5h1M785 209.5h1M787 209.5h1M789 209.5h1M791 209.5h1M881 209.5h1M883 209.5h1M885 209.5h1M887 209.5h1M891 209.5h1M893 209.5h1M896 209.5h1M899 209.5h1M902 209.5h2M905 209.5h2M908 209.5h2M913 209.5h1M917 209.5h1M922 209.5h1M926 209.5h1M746 210.5h3M751 210.5h2M756 210.5h2M760 210.5h2M765 210.5h1M768 210.5h1M771 210.5h1M774 210.5h1M777 210.5h1M780 210.5h1M782 210.5h1M785 210.5h1M788 210.5h1M790 210.5h1M792 210.5h1M880 210.5h1M882 210.5h1M884 210.5h1M887 210.5h1M890 210.5h1M892 210.5h1M895 210.5h1M898 210.5h1M901 210.5h1M904 210.5h1M907 210.5h1M911 210.5h2M915 210.5h2M920 210.5h2M924 210.5h3M746 211.5h1M749 211.5h2M753 211.5h2M758 211.5h1M762 211.5h1M766 211.5h1M769 211.5h1M772 211.5h1M775 211.5h2M778 211.5h1M781 211.5h1M783 211.5h1M786 211.5h1M789 211.5h1M791 211.5h1M793 211.5h1M879 211.5h1M881 211.5h1M883 211.5h1M886 211.5h1M889 211.5h1M891 211.5h1M894 211.5h1M896 211.5h2M900 211.5h1M903 211.5h1M906 211.5h1M910 211.5h1M914 211.5h1M918 211.5h2M922 211.5h2M926 211.5h1M746 212.5h1M751 212.5h1M755 212.5h1M759 212.5h2M763 212.5h2M767 212.5h2M770 212.5h1M773 212.5h1M777 212.5h1M779 212.5h1M782 212.5h1M784 212.5h1M787 212.5h1M790 212.5h1M792 212.5h1M794 212.5h1M878 212.5h1M880 212.5h1M882 212.5h1M885 212.5h1M888 212.5h1M890 212.5h1M893 212.5h1M895 212.5h1M899 212.5h1M902 212.5h1M904 212.5h2M908 212.5h2M912 212.5h2M917 212.5h1M921 212.5h1M926 212.5h1M746 213.5h3M752 213.5h2M756 213.5h2M761 213.5h1M765 213.5h1M769 213.5h1M771 213.5h2M774 213.5h1M778 213.5h1M780 213.5h1M783 213.5h1M785 213.5h1M788 213.5h1M791 213.5h1M793 213.5h1M795 213.5h1M877 213.5h1M879 213.5h1M881 213.5h1M884 213.5h1M887 213.5h1M889 213.5h1M892 213.5h1M894 213.5h1M898 213.5h1M900 213.5h2M903 213.5h1M907 213.5h1M911 213.5h1M915 213.5h2M919 213.5h2M924 213.5h2M927 213.5h1M745 214.5h1M749 214.5h2M754 214.5h2M758 214.5h1M762 214.5h2M766 214.5h2M770 214.5h1M773 214.5h1M775 214.5h2M779 214.5h1M781 214.5h1M784 214.5h1M786 214.5h1M789 214.5h1M791 214.5h1M794 214.5h2M877 214.5h2M881 214.5h1M883 214.5h1M886 214.5h1M888 214.5h1M891 214.5h1M893 214.5h1M896 214.5h2M899 214.5h1M902 214.5h1M905 214.5h2M909 214.5h2M914 214.5h1M917 214.5h2M922 214.5h2M927 214.5h1M745 215.5h3M751 215.5h2M756 215.5h1M759 215.5h2M764 215.5h1M768 215.5h1M771 215.5h2M774 215.5h1M777 215.5h1M780 215.5h1M782 215.5h1M785 215.5h1M787 215.5h1M790 215.5h1M792 215.5h1M794 215.5h1M796 215.5h1M876 215.5h1M878 215.5h1M880 215.5h1M882 215.5h1M885 215.5h1M887 215.5h1M890 215.5h1M892 215.5h1M895 215.5h1M898 215.5h1M900 215.5h2M904 215.5h1M908 215.5h1M912 215.5h2M916 215.5h1M920 215.5h2M925 215.5h3M744 216.5h1M748 216.5h2M753 216.5h1M757 216.5h2M761 216.5h1M765 216.5h2M769 216.5h1M773 216.5h1M775 216.5h2M778 216.5h1M781 216.5h1M783 216.5h1M786 216.5h1M788 216.5h1M791 216.5h1M793 216.5h1M795 216.5h1M797 216.5h1M875 216.5h1M877 216.5h1M879 216.5h1M881 216.5h1M884 216.5h1M886 216.5h1M889 216.5h1M891 216.5h1M894 216.5h1M896 216.5h2M899 216.5h1M903 216.5h1M906 216.5h2M911 216.5h1M914 216.5h2M919 216.5h1M923 216.5h2M928 216.5h1M744 217.5h1M750 217.5h2M754 217.5h2M759 217.5h1M762 217.5h2M767 217.5h1M770 217.5h2M774 217.5h1M777 217.5h1M779 217.5h1M782 217.5h1M784 217.5h2M787 217.5h1M789 217.5h1M792 217.5h1M794 217.5h1M796 217.5h1M876 217.5h1M878 217.5h1M880 217.5h1M883 217.5h1M885 217.5h1M887 217.5h2M890 217.5h1M893 217.5h1M895 217.5h1M898 217.5h1M901 217.5h2M905 217.5h1M909 217.5h2M913 217.5h1M917 217.5h2M921 217.5h2M928 217.5h1M744 218.5h3M752 218.5h1M756 218.5h2M760 218.5h2M764 218.5h2M768 218.5h1M772 218.5h1M775 218.5h2M778 218.5h1M780 218.5h2M783 218.5h1M786 218.5h1M788 218.5h1M790 218.5h1M793 218.5h1M795 218.5h1M877 218.5h1M879 218.5h1M882 218.5h1M884 218.5h1M886 218.5h1M889 218.5h1M891 218.5h2M894 218.5h1M896 218.5h2M900 218.5h1M904 218.5h1M907 218.5h2M911 218.5h2M915 218.5h2M920 218.5h1M926 218.5h3M744 219.5h1M747 219.5h2M753 219.5h2M758 219.5h2M762 219.5h2M766 219.5h1M769 219.5h2M773 219.5h2M777 219.5h1M779 219.5h1M782 219.5h1M784 219.5h2M787 219.5h1M789 219.5h1M791 219.5h1M794 219.5h1M878 219.5h1M881 219.5h1M883 219.5h1M885 219.5h1M887 219.5h2M890 219.5h1M893 219.5h1M895 219.5h1M898 219.5h2M902 219.5h2M906 219.5h1M909 219.5h2M913 219.5h2M918 219.5h2M924 219.5h2M928 219.5h1M744 220.5h2M749 220.5h2M755 220.5h2M760 220.5h1M764 220.5h1M767 220.5h2M771 220.5h1M775 220.5h1M778 220.5h1M780 220.5h2M783 220.5h1M786 220.5h1M788 220.5h1M790 220.5h1M792 220.5h1M880 220.5h1M882 220.5h1M884 220.5h1M886 220.5h1M889 220.5h1M891 220.5h2M894 220.5h1M897 220.5h1M901 220.5h1M904 220.5h2M908 220.5h1M912 220.5h1M916 220.5h2M922 220.5h2M927 220.5h2M744 221.5h1M746 221.5h2M751 221.5h2M757 221.5h2M761 221.5h2M765 221.5h2M769 221.5h1M772 221.5h2M776 221.5h2M779 221.5h2M782 221.5h1M784 221.5h1M787 221.5h1M789 221.5h1M791 221.5h1M881 221.5h1M883 221.5h1M885 221.5h1M888 221.5h1M890 221.5h1M892 221.5h2M895 221.5h2M899 221.5h2M903 221.5h1M906 221.5h2M910 221.5h2M914 221.5h2M920 221.5h2M925 221.5h2M928 221.5h1M744 222.5h2M748 222.5h2M753 222.5h2M759 222.5h1M763 222.5h2M767 222.5h2M770 222.5h2M774 222.5h1M778 222.5h1M781 222.5h1M783 222.5h1M785 222.5h2M788 222.5h1M790 222.5h1M882 222.5h1M884 222.5h1M886 222.5h2M889 222.5h1M891 222.5h1M894 222.5h1M898 222.5h1M901 222.5h2M904 222.5h2M908 222.5h2M913 222.5h1M918 222.5h2M923 222.5h2M927 222.5h2M744 223.5h1M746 223.5h2M750 223.5h2M755 223.5h2M760 223.5h2M765 223.5h2M769 223.5h1M772 223.5h1M775 223.5h2M779 223.5h1M782 223.5h1M784 223.5h2M787 223.5h1M789 223.5h1M883 223.5h1M885 223.5h1M887 223.5h2M890 223.5h1M893 223.5h1M896 223.5h2M900 223.5h1M903 223.5h1M906 223.5h2M911 223.5h2M916 223.5h2M921 223.5h2M925 223.5h2M928 223.5h1M743 224.5h1M748 224.5h2M752 224.5h2M757 224.5h2M762 224.5h2M767 224.5h1M770 224.5h2M773 224.5h2M777 224.5h1M780 224.5h2M783 224.5h2M786 224.5h1M788 224.5h1M884 224.5h1M886 224.5h1M888 224.5h2M891 224.5h2M895 224.5h1M898 224.5h2M901 224.5h2M905 224.5h1M909 224.5h2M914 224.5h2M919 224.5h2M923 224.5h2M929 224.5h1M743 225.5h2M750 225.5h2M754 225.5h3M759 225.5h2M764 225.5h2M768 225.5h2M772 225.5h2M775 225.5h1M778 225.5h1M782 225.5h1M785 225.5h1M787 225.5h1M885 225.5h1M887 225.5h1M890 225.5h1M894 225.5h1M897 225.5h1M899 225.5h2M903 225.5h2M907 225.5h2M912 225.5h2M916 225.5h3M921 225.5h2M928 225.5h2M743 226.5h1M745 226.5h2M752 226.5h2M757 226.5h2M761 226.5h2M766 226.5h1M770 226.5h2M774 226.5h1M776 226.5h2M779 226.5h2M783 226.5h2M786 226.5h1M886 226.5h1M888 226.5h2M892 226.5h2M895 226.5h2M898 226.5h1M901 226.5h2M906 226.5h1M910 226.5h2M914 226.5h2M919 226.5h2M926 226.5h2M929 226.5h1M743 227.5h2M747 227.5h3M754 227.5h2M759 227.5h2M763 227.5h2M767 227.5h2M772 227.5h2M775 227.5h2M778 227.5h2M781 227.5h1M785 227.5h1M887 227.5h1M891 227.5h1M893 227.5h2M896 227.5h2M899 227.5h2M904 227.5h2M908 227.5h2M912 227.5h2M917 227.5h2M923 227.5h3M928 227.5h2M743 228.5h1M745 228.5h2M750 228.5h2M756 228.5h2M761 228.5h2M765 228.5h2M769 228.5h2M774 228.5h1M777 228.5h1M780 228.5h1M782 228.5h2M889 228.5h2M892 228.5h1M895 228.5h1M898 228.5h1M902 228.5h2M906 228.5h2M910 228.5h2M915 228.5h2M921 228.5h2M926 228.5h2M929 228.5h1M743 229.5h1M747 229.5h3M752 229.5h2M758 229.5h2M763 229.5h2M767 229.5h2M771 229.5h2M775 229.5h2M778 229.5h2M781 229.5h2M784 229.5h1M888 229.5h1M890 229.5h2M893 229.5h2M896 229.5h2M900 229.5h2M904 229.5h2M908 229.5h2M913 229.5h2M919 229.5h2M923 229.5h3M929 229.5h1M743 230.5h2M750 230.5h3M754 230.5h3M760 230.5h3M765 230.5h2M769 230.5h2M773 230.5h1M777 230.5h2M780 230.5h2M783 230.5h1M889 230.5h1M891 230.5h2M894 230.5h2M899 230.5h1M902 230.5h2M906 230.5h2M910 230.5h3M916 230.5h3M920 230.5h3M928 230.5h2M743 231.5h1M745 231.5h3M753 231.5h2M757 231.5h2M763 231.5h2M767 231.5h3M771 231.5h2M774 231.5h2M779 231.5h2M782 231.5h1M890 231.5h1M892 231.5h2M897 231.5h2M900 231.5h2M903 231.5h3M908 231.5h2M914 231.5h2M918 231.5h2M925 231.5h3M929 231.5h1M743 232.5h2M748 232.5h2M755 232.5h3M759 232.5h3M765 232.5h2M770 232.5h2M773 232.5h2M776 232.5h2M781 232.5h1M891 232.5h1M895 232.5h2M898 232.5h2M901 232.5h2M906 232.5h2M911 232.5h3M915 232.5h3M923 232.5h2M928 232.5h2M743 233.5h1M745 233.5h3M750 233.5h3M758 233.5h3M762 233.5h2M767 233.5h2M772 233.5h2M775 233.5h2M778 233.5h2M893 233.5h2M896 233.5h2M899 233.5h2M904 233.5h2M909 233.5h2M912 233.5h3M920 233.5h3M925 233.5h3M929 233.5h1M743 234.5h1M748 234.5h3M753 234.5h3M761 234.5h2M764 234.5h3M769 234.5h2M774 234.5h2M777 234.5h2M780 234.5h1M892 234.5h1M894 234.5h2M897 234.5h2M902 234.5h2M906 234.5h3M910 234.5h2M917 234.5h3M922 234.5h3M929 234.5h1M743 235.5h2M751 235.5h3M756 235.5h3M763 235.5h3M767 235.5h2M771 235.5h2M776 235.5h2M779 235.5h1M893 235.5h1M895 235.5h2M900 235.5h2M904 235.5h2M907 235.5h3M914 235.5h3M919 235.5h3M928 235.5h2M743 236.5h1M745 236.5h3M754 236.5h3M759 236.5h2M766 236.5h2M769 236.5h2M773 236.5h2M778 236.5h2M893 236.5h2M898 236.5h2M902 236.5h2M905 236.5h2M912 236.5h2M916 236.5h3M925 236.5h3M929 236.5h1M743 237.5h2M748 237.5h4M757 237.5h3M761 237.5h3M768 237.5h6M775 237.5h2M896 237.5h2M899 237.5h6M909 237.5h3M913 237.5h3M921 237.5h4M928 237.5h2M743 238.5h1M745 238.5h4M752 238.5h3M760 238.5h2M764 238.5h3M771 238.5h5M777 238.5h2M894 238.5h2M897 238.5h5M906 238.5h3M911 238.5h2M918 238.5h3M924 238.5h4M929 238.5h1M743 239.5h2M749 239.5h3M755 239.5h3M762 239.5h3M767 239.5h3M774 239.5h4M895 239.5h4M903 239.5h3M908 239.5h3M915 239.5h3M921 239.5h3M928 239.5h2M743 240.5h1M745 240.5h4M752 240.5h4M758 240.5h3M765 240.5h3M770 240.5h2M776 240.5h2M895 240.5h2M901 240.5h2M905 240.5h3M912 240.5h3M917 240.5h4M924 240.5h4M929 240.5h1M744 241.5h1M749 241.5h3M756 241.5h3M761 241.5h3M768 241.5h3M772 241.5h3M898 241.5h3M902 241.5h3M909 241.5h3M914 241.5h3M921 241.5h3M928 241.5h1M744 242.5h3M752 242.5h4M759 242.5h3M764 242.5h4M771 242.5h3M775 242.5h2M896 242.5h2M899 242.5h3M905 242.5h4M911 242.5h3M917 242.5h4M926 242.5h3M744 243.5h1M747 243.5h4M756 243.5h3M762 243.5h4M768 243.5h3M774 243.5h2M897 243.5h2M902 243.5h3M907 243.5h4M914 243.5h3M922 243.5h4M928 243.5h1M744 244.5h3M751 244.5h4M759 244.5h3M766 244.5h3M771 244.5h3M899 244.5h3M904 244.5h3M911 244.5h3M918 244.5h4M926 244.5h3M744 245.5h1M747 245.5h5M755 245.5h5M762 245.5h4M769 245.5h4M774 245.5h2M897 245.5h2M900 245.5h4M907 245.5h4M913 245.5h5M921 245.5h5M927 245.5h1M745 246.5h3M752 246.5h5M760 246.5h4M766 246.5h3M773 246.5h2M898 246.5h2M904 246.5h3M909 246.5h4M916 246.5h5M925 246.5h3M745 247.5h1M748 247.5h5M757 247.5h4M764 247.5h4M769 247.5h4M900 247.5h4M905 247.5h4M912 247.5h4M920 247.5h5M927 247.5h1M745 248.5h1M753 248.5h4M761 248.5h5M768 248.5h4M773 248.5h2M898 248.5h2M901 248.5h4M907 248.5h5M916 248.5h4M927 248.5h1M745 249.5h4M757 249.5h5M766 249.5h5M772 249.5h3M898 249.5h3M902 249.5h5M911 249.5h5M924 249.5h4M745 250.5h1M749 250.5h7M762 250.5h5M771 250.5h3M899 250.5h3M906 250.5h5M917 250.5h7M926 250.5h1M746 251.5h4M756 251.5h7M767 251.5h4M902 251.5h4M910 251.5h7M923 251.5h4M746 252.5h1M750 252.5h6M763 252.5h7M771 252.5h3M899 252.5h3M903 252.5h7M917 252.5h6M925 252.5h1M747 253.5h5M756 253.5h7M770 253.5h4M899 253.5h4M910 253.5h7M921 253.5h5M747 254.5h1M752 254.5h8M763 254.5h6M904 254.5h6M913 254.5h8M925 254.5h1M747 255.5h5M760 255.5h8M769 255.5h4M900 255.5h4M905 255.5h8M921 255.5h5M747 256.5h1M752 256.5h8M768 256.5h5M900 256.5h5M913 256.5h8M925 256.5h1M748 257.5h1M760 257.5h8M905 257.5h8M924 257.5h1M748 258.5h13M768 258.5h5M900 258.5h5M912 258.5h13M748 259.5h1M761 259.5h12M900 259.5h12M923 259.5h1M749 260.5h12M912 260.5h12M749 261.5h1M761 261.5h12M900 261.5h12M922 261.5h1M750 262.5h23M900 262.5h23M750 263.5h1M921 263.5h1M751 264.5h22M900 264.5h22M751 265.5h1M763 265.5h10M900 265.5h10M920 265.5h1M752 266.5h11M910 266.5h11M752 267.5h1M763 267.5h10M900 267.5h10M919 267.5h1M753 268.5h10M768 268.5h5M900 268.5h5M910 268.5h10M753 269.5h1M759 269.5h9M905 269.5h9M918 269.5h1M754 270.5h5M764 270.5h9M900 270.5h9M914 270.5h5M755 271.5h9M769 271.5h4M900 271.5h4M909 271.5h9M755 272.5h1M761 272.5h8M904 272.5h8M916 272.5h1M756 273.5h5M769 273.5h4M900 273.5h4M912 273.5h5M756 274.5h1M761 274.5h8M770 274.5h3M900 274.5h3M904 274.5h8M915 274.5h1M757 275.5h4M766 275.5h4M903 275.5h4M912 275.5h4M757 276.5h1M761 276.5h5M770 276.5h4M899 276.5h4M907 276.5h5M914 276.5h1M758 277.5h3M763 277.5h7M771 277.5h3M899 277.5h3M903 277.5h7M912 277.5h3M759 278.5h4M767 278.5h4M902 278.5h4M910 278.5h4M759 279.5h1M763 279.5h4M772 279.5h2M899 279.5h2M906 279.5h4M912 279.5h1M760 280.5h3M768 280.5h4M773 280.5h2M898 280.5h2M901 280.5h4M910 280.5h3M760 281.5h1M764 281.5h4M769 281.5h4M900 281.5h4M905 281.5h4M911 281.5h1M761 282.5h3M765 282.5h4M773 282.5h2M898 282.5h2M904 282.5h4M909 282.5h3M762 283.5h3M770 283.5h3M774 283.5h2M897 283.5h2M900 283.5h3M908 283.5h3M763 284.5h1M766 284.5h4M771 284.5h5M897 284.5h5M903 284.5h4M909 284.5h1M764 285.5h2M767 285.5h4M772 285.5h2M899 285.5h2M902 285.5h4M907 285.5h2M765 286.5h2M770 286.5h2M775 286.5h2M896 286.5h2M901 286.5h2M906 286.5h2M765 287.5h1M768 287.5h2M772 287.5h3M776 287.5h2M895 287.5h2M898 287.5h3M903 287.5h2M906 287.5h1M766 288.5h2M769 288.5h3M773 288.5h3M897 288.5h3M901 288.5h3M905 288.5h2M767 289.5h2M770 289.5h3M776 289.5h2M895 289.5h2M900 289.5h3M904 289.5h2M768 290.5h2M774 290.5h2M777 290.5h2M894 290.5h2M897 290.5h2M903 290.5h2M769 291.5h1M772 291.5h2M775 291.5h2M778 291.5h2M893 291.5h2M896 291.5h2M899 291.5h2M903 291.5h1M770 292.5h2M773 292.5h2M776 292.5h2M895 292.5h2M898 292.5h2M901 292.5h2M771 293.5h2M774 293.5h2M778 293.5h2M893 293.5h2M897 293.5h2M900 293.5h2M772 294.5h2M776 294.5h2M780 294.5h1M892 294.5h1M895 294.5h2M899 294.5h2M774 295.5h2M778 295.5h2M781 295.5h1M891 295.5h1M893 295.5h2M897 295.5h3M774 296.5h1M776 296.5h2M779 296.5h2M892 296.5h2M895 296.5h3M775 297.5h1M777 297.5h2M782 297.5h1M890 297.5h1M894 297.5h2M897 297.5h1M776 298.5h2M780 298.5h2M783 298.5h1M889 298.5h1M891 298.5h2M896 298.5h1M778 299.5h2M781 299.5h2M784 299.5h1M888 299.5h1M890 299.5h2M893 299.5h3M779 300.5h2M782 300.5h2M785 300.5h1M887 300.5h1M889 300.5h2M892 300.5h2M780 301.5h2M783 301.5h2M786 301.5h1M886 301.5h1M888 301.5h2M891 301.5h2M782 302.5h1M784 302.5h2M887 302.5h2M890 302.5h2M783 303.5h1M786 303.5h2M885 303.5h2M889 303.5h1M784 304.5h2M787 304.5h2M884 304.5h2M887 304.5h2M785 305.5h2M789 305.5h1M883 305.5h1M886 305.5h2M787 306.5h2M790 306.5h1M882 306.5h1M884 306.5h3M788 307.5h2M791 307.5h1M881 307.5h1M883 307.5h2M790 308.5h1M792 308.5h1M880 308.5h1M882 308.5h2M791 309.5h1M793 309.5h1M879 309.5h1M881 309.5h1M792 310.5h3M878 310.5h1M880 310.5h1M794 311.5h1M796 311.5h1M876 311.5h1M878 311.5h2M795 312.5h1M797 312.5h1M875 312.5h1M877 312.5h1M796 313.5h3M874 313.5h3M799 314.5h3M871 314.5h3M801 315.5h2M870 315.5h3M802 316.5h3M868 316.5h3M805 317.5h1M807 317.5h1M865 317.5h1M867 317.5h2M806 318.5h3M864 318.5h3" stroke="#0ff" stroke-width="1" fill="none"/>
<ellipse cx="836.5" cy="263.6" rx="64.5" ry="60.13" fill="none" stroke="#ff0" stroke-width="1"/>
<ellipse cx="836.5" cy="263.6" rx="87.3" ry="81.39" fill="none" stroke="#ff0" stroke-width="1"/>
<ellipse cx="836.5" cy="263.6" rx="110.1" ry="102.65" fill="none" stroke="#ff0" stroke-width="1"/>
<ellipse cx="836.5" cy="263.6" rx="132.9" ry="123.9" fill="none" stroke="#ff0" stroke-width="1"/>
<path d="M697 264.5 H978" stroke="#ff0" stroke-width="1" fill="none"/>
<path d="M876.5 213.66 A67.5 62.93 0 1 1 795.5 213.66 L799.1 218.13 A61.5 57.34 0 1 0 872.9 218.13 Z" fill="none" stroke="#f00" stroke-width="3" stroke-linejoin="miter"/>
<text stroke="#ff0" stroke-width="0.35" x="838" y="131" font-size="6" textLength="19" lengthAdjust="spacingAndGlyphs" fill="#ff0">s [mm]</text>
<text stroke="#ff0" stroke-width="0.35" x="838" y="203.27" font-size="5.5" fill="#ff0">0</text>
<text stroke="#ff0" stroke-width="0.35" x="838" y="182.01" font-size="5.5" fill="#ff0">2</text>
<text stroke="#ff0" stroke-width="0.35" x="838" y="160.75" font-size="5.5" fill="#ff0">4</text>
<text stroke="#ff0" stroke-width="0.35" x="838" y="139.5" font-size="5.5" fill="#ff0">6</text>
<text stroke="#0f0" stroke-width="0.35" x="713" y="149.3" font-size="7.6" fill="#0f0">s = f (phi)</text>
<path d="M34.5 523.5 H402.5 V646.5 H34.5 Z M34.5 543.5 H402.5 M34.5 564.5 H402.5 M34.5 584.5 H402.5 M34.5 605.5 H402.5 M34.5 626.5 H402.5 M193.5 543.5 V646.5 M263.5 543.5 V646.5 M332.5 543.5 V646.5 M476.5 523.5 H974.5 V687.5 H476.5 Z M476.5 543.5 H974.5 M476.5 564.5 H974.5 M476.5 584.5 H974.5 M476.5 605.5 H974.5 M476.5 626.5 H974.5 M476.5 646.5 H974.5 M476.5 667.5 H974.5 M695.5 543.5 V687.5 M765.5 543.5 V687.5 M834.5 543.5 V687.5 M904.5 543.5 V687.5" stroke="#ff0" stroke-width="1" fill="none" shape-rendering="crispEdges"/>
<text x="38.5" y="538.6" font-size="14" fill="#0f0" xml:space="preserve">EN 10270-1-DH</text>
<text x="176" y="538.6" font-size="14" fill="#0f0" textLength="153.5" lengthAdjust="spacing" xml:space="preserve">Pat.gez.Federstahldraht</text>
<text x="38.5" y="559.2" font-size="14" fill="#0f0" textLength="127" lengthAdjust="spacing" xml:space="preserve">modulus of elasticity</text>
<text x="197.5" y="559.2" font-size="14" fill="#0f0" xml:space="preserve">E</text>
<text x="267" y="559.2" font-size="14" fill="#0f0" textLength="29.5" lengthAdjust="spacing" xml:space="preserve">MPa</text>
<text x="336" y="559.2" font-size="14" fill="#0f0" textLength="48" lengthAdjust="spacing" xml:space="preserve">206000</text>
<text x="38.5" y="579.8" font-size="14" fill="#0f0" textLength="92.7" lengthAdjust="spacing" xml:space="preserve">shear modulus</text>
<text x="197.5" y="579.8" font-size="14" fill="#0f0" xml:space="preserve">G</text>
<text x="267" y="579.8" font-size="14" fill="#0f0" textLength="29.5" lengthAdjust="spacing" xml:space="preserve">MPa</text>
<text x="340" y="579.8" font-size="14" fill="#0f0" textLength="40" lengthAdjust="spacing" xml:space="preserve">82000</text>
<text x="38.5" y="600.4" font-size="14" fill="#0f0" xml:space="preserve">density</text>
<text x="197.5" y="600.4" font-size="14" fill="#0f0" xml:space="preserve">rho</text>
<text x="267" y="600.4" font-size="14" fill="#0f0" textLength="54" lengthAdjust="spacing" xml:space="preserve">kg/dm^3</text>
<text x="344" y="600.4" font-size="14" fill="#0f0" textLength="28" lengthAdjust="spacing" xml:space="preserve">7,85</text>
<text x="38.5" y="621" font-size="14" fill="#0f0" textLength="95.5" lengthAdjust="spacing" xml:space="preserve">tensile strength</text>
<text x="197.5" y="621" font-size="14" fill="#0f0" xml:space="preserve">Rm</text>
<text x="267" y="621" font-size="14" fill="#0f0" textLength="29.5" lengthAdjust="spacing" xml:space="preserve">MPa</text>
<text x="336" y="621" font-size="14" fill="#0f0" textLength="32" lengthAdjust="spacing" xml:space="preserve">1706</text>
<text x="38.5" y="641.6" font-size="14" fill="#0f0" textLength="127.5" lengthAdjust="spacing" xml:space="preserve">adm. bending stress</text>
<text x="197.5" y="641.6" font-size="14" fill="#0f0" xml:space="preserve">sig.perm</text>
<text x="267" y="641.6" font-size="14" fill="#0f0" textLength="29.5" lengthAdjust="spacing" xml:space="preserve">MPa</text>
<text x="336" y="641.6" font-size="14" fill="#0f0" textLength="32" lengthAdjust="spacing" xml:space="preserve">1194</text>
<text x="480" y="538.6" font-size="14" fill="#0f0" textLength="65.5" lengthAdjust="spacing" xml:space="preserve">RESULTS</text>
<text x="842.5" y="538.6" font-size="14" fill="#0f0" xml:space="preserve">i</text>
<text x="908.5" y="538.6" font-size="14" fill="#0f0" xml:space="preserve">perm</text>
<text x="480" y="559.2" font-size="14" fill="#0f0" xml:space="preserve">spring load</text>
<text x="699.5" y="559.2" font-size="14" fill="#0f0" xml:space="preserve">F</text>
<text x="769" y="559.2" font-size="14" fill="#0f0" xml:space="preserve">N</text>
<text x="838.5" y="559.2" font-size="14" fill="#0f0" textLength="24" lengthAdjust="spacing" xml:space="preserve">120</text>
<text x="908.5" y="559.2" font-size="14" fill="#0f0" textLength="36" lengthAdjust="spacing" xml:space="preserve">155,8</text>
<text x="480" y="579.8" font-size="14" fill="#0f0" textLength="107" lengthAdjust="spacing" xml:space="preserve">bending moment</text>
<text x="699.5" y="579.8" font-size="14" fill="#0f0" xml:space="preserve">Mb</text>
<text x="769" y="579.8" font-size="14" fill="#0f0" xml:space="preserve">Nmm</text>
<text x="838.5" y="579.8" font-size="14" fill="#0f0" textLength="40" lengthAdjust="spacing" xml:space="preserve">10800</text>
<text x="908.5" y="579.8" font-size="14" fill="#0f0" textLength="40" lengthAdjust="spacing" xml:space="preserve">14022</text>
<text x="480" y="600.4" font-size="14" fill="#0f0" textLength="92" lengthAdjust="spacing" xml:space="preserve">bending stress</text>
<text x="699.5" y="600.4" font-size="14" fill="#0f0" xml:space="preserve">Sig.b</text>
<text x="769" y="600.4" font-size="14" fill="#0f0" textLength="29.5" lengthAdjust="spacing" xml:space="preserve">MPa</text>
<text x="838.5" y="600.4" font-size="14" fill="#0f0" textLength="24" lengthAdjust="spacing" xml:space="preserve">880</text>
<text x="908.5" y="600.4" font-size="14" fill="#0f0" textLength="32" lengthAdjust="spacing" xml:space="preserve">1194</text>
<text x="480" y="621" font-size="14" fill="#0f0" textLength="158.5" lengthAdjust="spacing" xml:space="preserve">bending stress (q=1,045)</text>
<text x="699.5" y="621" font-size="14" fill="#0f0" xml:space="preserve">Sig.bq</text>
<text x="769" y="621" font-size="14" fill="#0f0" textLength="29.5" lengthAdjust="spacing" xml:space="preserve">MPa</text>
<text x="838.5" y="621" font-size="14" fill="#0f0" textLength="36" lengthAdjust="spacing" xml:space="preserve">919,8</text>
<text x="908.5" y="621" font-size="14" fill="#0f0" textLength="32" lengthAdjust="spacing" xml:space="preserve">1194</text>
<text x="480" y="641.6" font-size="14" fill="#0f0" xml:space="preserve">deflection</text>
<text x="699.5" y="641.6" font-size="14" fill="#0f0" xml:space="preserve">s</text>
<text x="769" y="641.6" font-size="14" fill="#0f0" xml:space="preserve">mm</text>
<text x="838.5" y="641.6" font-size="14" fill="#0f0" textLength="36" lengthAdjust="spacing" xml:space="preserve">4,614</text>
<text x="908.5" y="641.6" font-size="14" fill="#0f0" textLength="28" lengthAdjust="spacing" xml:space="preserve">5,99</text>
<text x="480" y="662.2" font-size="14" fill="#0f0" xml:space="preserve">opening width</text>
<text x="699.5" y="662.2" font-size="14" fill="#0f0" xml:space="preserve">e</text>
<text x="769" y="662.2" font-size="14" fill="#0f0" xml:space="preserve">mm</text>
<text x="838.5" y="662.2" font-size="14" fill="#0f0" textLength="36" lengthAdjust="spacing" xml:space="preserve">71,06</text>
<text x="908.5" y="662.2" font-size="14" fill="#0f0" textLength="36" lengthAdjust="spacing" xml:space="preserve">74,27</text>
<text x="480" y="682.8" font-size="14" fill="#0f0" textLength="184.5" lengthAdjust="spacing" xml:space="preserve">safety Sigma bperm/Sigma b</text>
<text x="699.5" y="682.8" font-size="14" fill="#0f0" xml:space="preserve">S</text>
<text x="838.5" y="682.8" font-size="14" fill="#0f0" textLength="36" lengthAdjust="spacing" xml:space="preserve">1,298</text>
<text x="912.5" y="682.8" font-size="14" fill="#0f0" xml:space="preserve">1</text>
<text x="8.5" y="66" font-size="16" textLength="188" lengthAdjust="spacing" fill="#0ff" xml:space="preserve">Spring Lock  1234567890</text>
</svg>
<div id="title">
<svg id="icon" viewBox="0 0 16 16"><rect width="16" height="16" fill="#c0c0c0"/><path d="M5.24 1.76 A6.3 6.3 0 1 0 9.96 1.76" fill="none" stroke="#000" stroke-width="3.6" stroke-dasharray="1.4 1.4"/><path d="M5.24 1.76 A6.3 6.3 0 1 0 9.96 1.76" fill="none" stroke="#f00" stroke-width="2"/><path d="M1 7.5 H11 M12 7.5 H15" stroke="#ff0" stroke-width="1" shape-rendering="crispEdges"/><path d="M11.8 0.4l1.8 1.6-1.2 .6z" fill="#099"/><rect x="0" y="7" width="1" height="1" fill="#09c"/></svg>
<div class="txt">FED11 - Spring locks  -  holzmane.f11</div>
<svg class="cap" style="left:878px" width="138" height="30" viewBox="0 0 138 30"><path d="M17.5 14.5 H28" stroke="#000" stroke-width="1" shape-rendering="crispEdges"/><rect x="63.5" y="9.5" width="9" height="9" fill="none" stroke="#000" stroke-width="1" shape-rendering="crispEdges"/><path d="M109.3 9.3 L119 19 M119 9.3 L109.3 19" stroke="#000" stroke-width="1.1"/></svg>
</div>
<div id="menu"><span class="mi" style="left:7.4px;transform:scaleX(0.91)"><u>F</u>ile</span><span class="mi" style="left:39px;transform:scaleX(0.94)"><u>E</u>dit</span><span class="mi" style="left:73px;transform:scaleX(0.95)"><u>V</u>iew</span><span class="mi" style="left:112.3px;transform:scaleX(0.919)"><u>C</u>AD</span><span class="mi" style="left:150.2px;transform:scaleX(0.934)"><u>D</u>atabase</span><span class="mi" style="left:212.3px;transform:scaleX(1.014)">D<u>o</u>cument</span><span class="mi" style="left:282.4px;transform:scaleX(0.848)">O<u>L</u>E</span><span class="mi" style="left:317.2px;transform:scaleX(0.984)"><u>H</u>elp</span><div class="line"></div></div>
</div>
</body></html>
